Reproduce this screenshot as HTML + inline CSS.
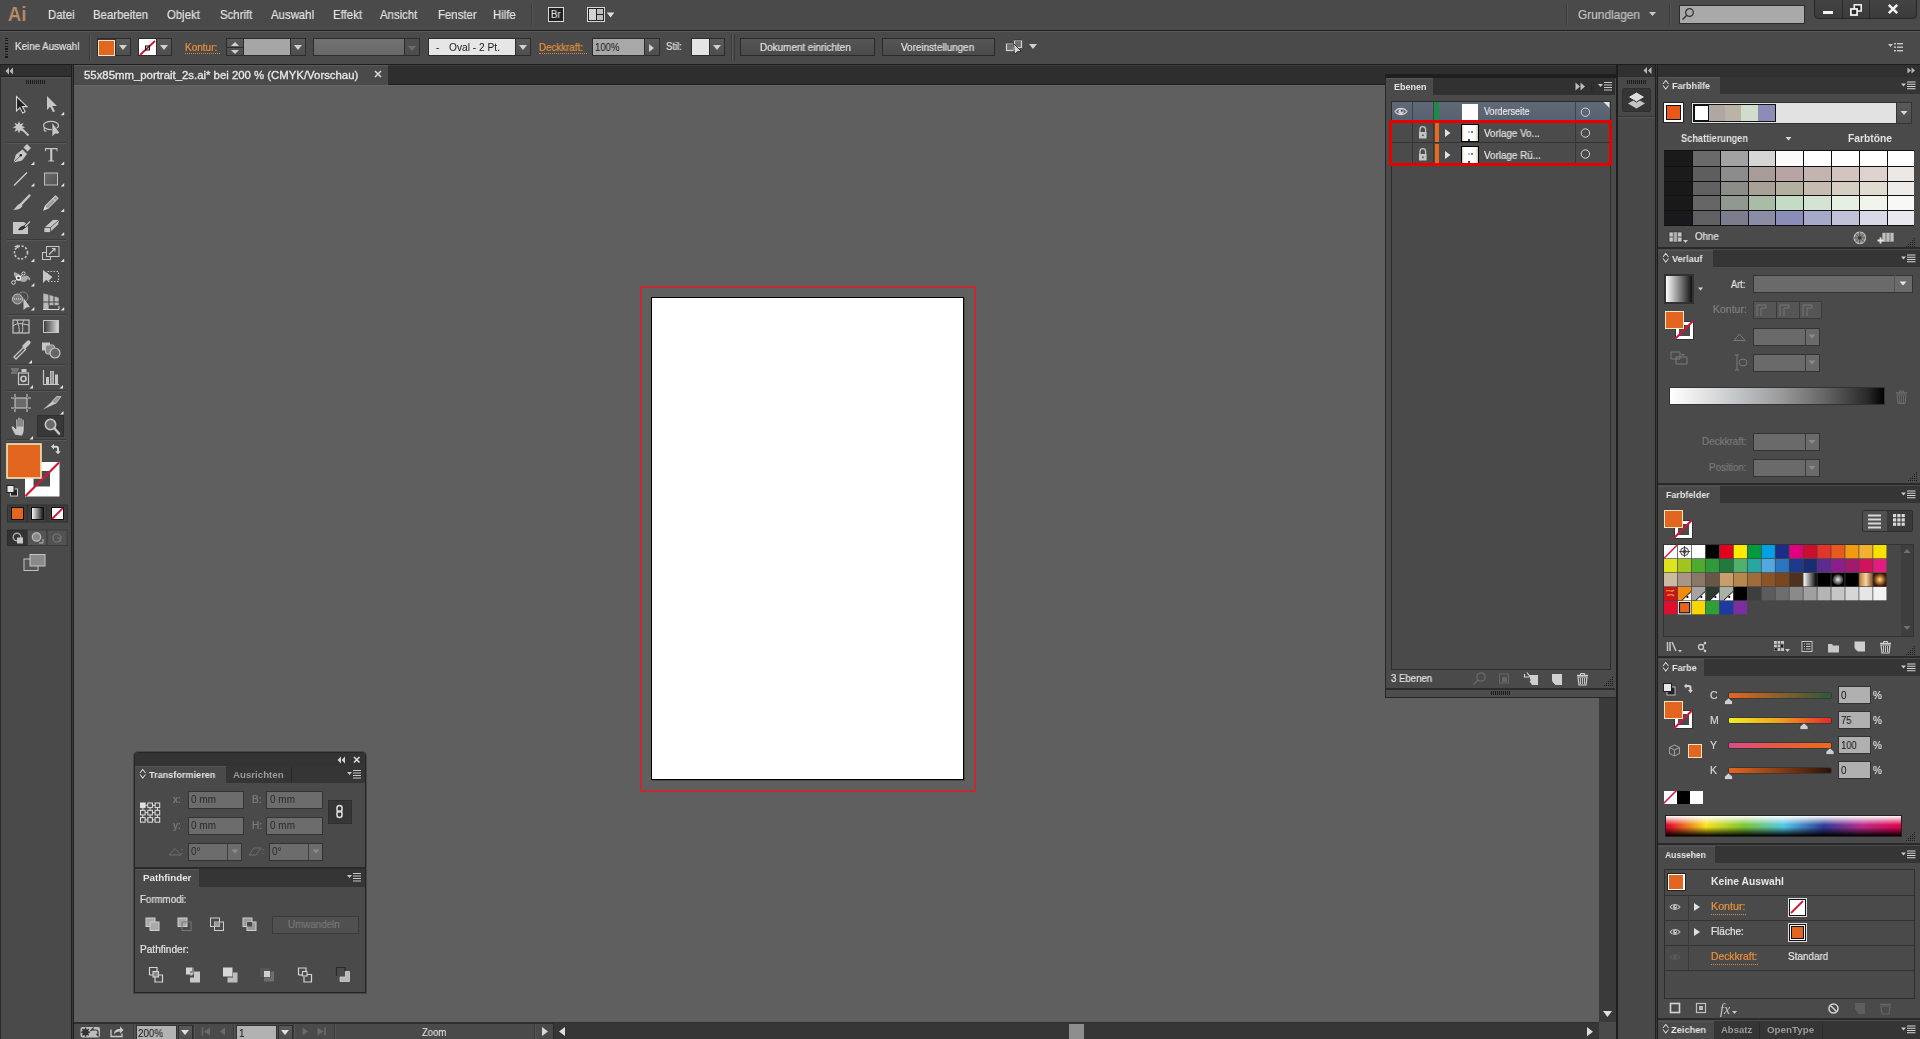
<!DOCTYPE html>
<html><head><meta charset="utf-8">
<style>
*{margin:0;padding:0;box-sizing:border-box}
html,body{width:1920px;height:1039px;overflow:hidden;background:#4a4a4a;font-family:"Liberation Sans",sans-serif;color:#dcdcdc;font-size:10px}
.a{position:absolute}
.t{position:absolute;white-space:nowrap;line-height:1;will-change:transform}
.r{-webkit-text-stroke:0.2px currentColor}
svg{overflow:visible}
</style></head><body>
<div class="a" style="left:0px;top:0px;width:1920px;height:30px;background:#4a4a4a;"></div>
<div class="a" style="left:0px;top:30px;width:1920px;height:1px;background:#1e1e1e;"></div>
<div class="a" style="left:0px;top:31px;width:1920px;height:33px;background:#4a4a4a;"></div>
<div class="a" style="left:0px;top:31px;width:1920px;height:1px;background:#5a5a5a;"></div>
<div class="a" style="left:0px;top:64px;width:1920px;height:1px;background:#1e1e1e;"></div>
<div class="a" style="left:0px;top:65px;width:1920px;height:1px;background:#3a3a3a;"></div>
<div class="a" style="left:0px;top:66px;width:1920px;height:18px;background:#2e2e2e;"></div>
<div class="a" style="left:0px;top:84px;width:1920px;height:1px;background:#1e1e1e;"></div>
<div class="a" style="left:74px;top:85px;width:1525px;height:937px;background:#5f5f5f;"></div>
<div class="a" style="left:74px;top:85px;width:1525px;height:1px;background:#666666;"></div>
<div class="a" style="left:0px;top:65px;width:1px;height:974px;background:#2b2b2b;"></div>
<div class="a" style="left:1px;top:65px;width:70px;height:12px;background:#303030;"></div>
<div class="a" style="left:1px;top:77px;width:70px;height:962px;background:#4a4a4a;"></div>
<div class="a" style="left:1px;top:76px;width:70px;height:1px;background:#1e1e1e;"></div>
<div class="a" style="left:1px;top:77px;width:70px;height:1px;background:#565656;"></div>
<div class="a" style="left:71px;top:65px;width:1px;height:974px;background:#1e1e1e;"></div>
<div class="a" style="left:72px;top:65px;width:1px;height:974px;background:#3a3a3a;"></div>
<div class="a" style="left:73px;top:65px;width:1px;height:974px;background:#1e1e1e;"></div>
<div class="a" style="left:74px;top:1022px;width:1525px;height:2px;background:#2e2e2e;"></div>
<div class="a" style="left:74px;top:1024px;width:1525px;height:15px;background:#4a4a4a;"></div>
<div class="a" style="left:1599px;top:85px;width:17px;height:937px;background:#3a3a3a;"></div>
<div class="a" style="left:1616px;top:65px;width:2px;height:974px;background:#1e1e1e;"></div>
<div class="a" style="left:1618px;top:65px;width:37px;height:12px;background:#303030;"></div>
<div class="a" style="left:1618px;top:77px;width:37px;height:962px;background:#484848;"></div>
<div class="a" style="left:1655px;top:65px;width:1px;height:974px;background:#1e1e1e;"></div>
<div class="a" style="left:1656px;top:65px;width:1px;height:974px;background:#363636;"></div>
<div class="a" style="left:1657px;top:65px;width:1px;height:974px;background:#1e1e1e;"></div>
<div class="a" style="left:1658px;top:65px;width:262px;height:12px;background:#303030;"></div>
<div class="a" style="left:1658px;top:77px;width:262px;height:962px;background:#4a4a4a;"></div>
<div class="a" style="left:640px;top:286px;width:336px;height:506px;border:2px solid #c22a34;"></div>
<div class="a" style="left:652px;top:298px;width:313px;height:483px;background:rgba(0,0,0,0.25);"></div>
<div class="a" style="left:651px;top:297px;width:313px;height:483px;background:#fff;border:1px solid #000;"></div>
<div class="t" style="left:8px;top:3.22px;font-size:21px;color:#b98a66;transform:scaleX(0.88);transform-origin:0 0;font-weight:bold;letter-spacing:0px;">Ai</div>
<div class="t r" style="left:47.5px;top:9.14px;font-size:12px;color:#e2e2e2;transform:scaleX(0.95);transform-origin:0 0;">Datei</div>
<div class="t r" style="left:92.5px;top:9.14px;font-size:12px;color:#e2e2e2;transform:scaleX(0.95);transform-origin:0 0;">Bearbeiten</div>
<div class="t r" style="left:167px;top:9.14px;font-size:12px;color:#e2e2e2;transform:scaleX(0.95);transform-origin:0 0;">Objekt</div>
<div class="t r" style="left:220px;top:9.14px;font-size:12px;color:#e2e2e2;transform:scaleX(0.95);transform-origin:0 0;">Schrift</div>
<div class="t r" style="left:271px;top:9.14px;font-size:12px;color:#e2e2e2;transform:scaleX(0.95);transform-origin:0 0;">Auswahl</div>
<div class="t r" style="left:333.3px;top:9.14px;font-size:12px;color:#e2e2e2;transform:scaleX(0.95);transform-origin:0 0;">Effekt</div>
<div class="t r" style="left:380px;top:9.14px;font-size:12px;color:#e2e2e2;transform:scaleX(0.95);transform-origin:0 0;">Ansicht</div>
<div class="t r" style="left:437.5px;top:9.14px;font-size:12px;color:#e2e2e2;transform:scaleX(0.95);transform-origin:0 0;">Fenster</div>
<div class="t r" style="left:493px;top:9.14px;font-size:12px;color:#e2e2e2;transform:scaleX(0.95);transform-origin:0 0;">Hilfe</div>
<div class="a" style="left:531px;top:4px;width:1px;height:21px;background:#3a3a3a;"></div>
<div class="a" style="left:532px;top:4px;width:1px;height:21px;background:#555;"></div>
<div class="a" style="left:548px;top:7px;width:16px;height:15px;background:#222;border:1px solid #d8d8d8;"></div>
<div class="t r" style="left:551px;top:9.84px;font-size:10px;color:#dcdcdc;transform:scaleX(0.95);transform-origin:0 0;">Br</div>
<svg class="a" style="left:586px;top:6px;" width="30" height="18" viewBox="0 0 30 18"><rect x="1.5" y="1.5" width="17" height="14" fill="#222" stroke="#d8d8d8"/><rect x="3" y="3" width="7" height="11" fill="#d4d4d4"/><rect x="11" y="3" width="6" height="5" fill="#bdbdbd"/><rect x="11" y="9" width="6" height="5" fill="#bdbdbd"/><path d="M20.8 6.5h7.5l-3.75 5z" fill="#e0e0e0"/></svg>
<div class="a" style="left:1566px;top:4px;width:1px;height:21px;background:#3a3a3a;"></div>
<div class="a" style="left:1567px;top:4px;width:1px;height:21px;background:#555;"></div>
<div class="t r" style="left:1578px;top:8.84px;font-size:12px;color:#c4c4c4;transform:scaleX(0.99);transform-origin:0 0;">Grundlagen</div>
<svg class="a" style="left:1649px;top:12px;" width="8" height="5" viewBox="0 0 8 5"><path d="M0 0h7l-3.5 4z" fill="#c8c8c8"/></svg>
<div class="a" style="left:1669px;top:4px;width:1px;height:21px;background:#3a3a3a;"></div>
<div class="a" style="left:1670px;top:4px;width:1px;height:21px;background:#555;"></div>
<div class="a" style="left:1679px;top:5px;width:126px;height:19px;background:#a9a9a9;border:1px solid #2c2c2c;"></div>
<svg class="a" style="left:1681px;top:7px;" width="14" height="14" viewBox="0 0 14 14"><circle cx="8.5" cy="5.5" r="3.8" fill="none" stroke="#333" stroke-width="1.3"/><path d="M6 8l-4.5 4.5" stroke="#333" stroke-width="1.4"/></svg>
<div class="a" style="left:1814px;top:-3px;width:103px;height:22px;background:linear-gradient(#444,#3b3b3b);border:1px solid #262626;border-radius:0 0 4px 4px;box-shadow:inset 0 1px 0 #555;"></div>
<div class="a" style="left:1842px;top:0px;width:1px;height:18px;background:#2a2a2a;"></div>
<div class="a" style="left:1869px;top:0px;width:1px;height:18px;background:#2a2a2a;"></div>
<div class="a" style="left:1823px;top:10.5px;width:10px;height:3.5px;background:#f0f0f0;"></div>
<svg class="a" style="left:1849px;top:3px;" width="14" height="13" viewBox="0 0 14 13"><rect x="5.3" y="1.8" width="6.9" height="6.2" fill="#2a2a2a" stroke="#eee" stroke-width="1.6"/><rect x="1.9" y="6" width="6.2" height="6" fill="#2a2a2a" stroke="#eee" stroke-width="1.8"/></svg>
<svg class="a" style="left:1887px;top:3px;" width="12" height="12" viewBox="0 0 12 12"><path d="M1.8 1.8l8.4 8.4M10.2 1.8l-8.4 8.4" stroke="#f0f0f0" stroke-width="2.6"/></svg>
<div class="a" style="left:5px;top:37.5px;width:3px;height:1.3px;background:#1a1a1a;"></div>
<div class="a" style="left:5px;top:40.2px;width:3px;height:1.3px;background:#1a1a1a;"></div>
<div class="a" style="left:5px;top:42.9px;width:3px;height:1.3px;background:#1a1a1a;"></div>
<div class="a" style="left:5px;top:45.6px;width:3px;height:1.3px;background:#1a1a1a;"></div>
<div class="a" style="left:5px;top:48.3px;width:3px;height:1.3px;background:#1a1a1a;"></div>
<div class="a" style="left:5px;top:51.0px;width:3px;height:1.3px;background:#1a1a1a;"></div>
<div class="a" style="left:5px;top:53.7px;width:3px;height:1.3px;background:#1a1a1a;"></div>
<div class="a" style="left:5px;top:56.400000000000006px;width:3px;height:1.3px;background:#1a1a1a;"></div>
<div class="t r" style="left:15.4px;top:41.53px;font-size:10px;color:#e0e0e0;transform:scaleX(0.98);transform-origin:0 0;">Keine Auswahl</div>
<div class="a" style="left:89px;top:34px;width:1px;height:27px;background:#3a3a3a;"></div>
<div class="a" style="left:90px;top:34px;width:1px;height:27px;background:#585858;"></div>
<div class="a" style="left:97px;top:38px;width:19px;height:18px;background:#3a3a3a;border:1px solid #2c2c2c;"></div>
<div class="a" style="left:98px;top:39.5px;width:17px;height:16px;background:#e3661f;border:1px solid #f2e6c8;"></div>
<div class="a" style="left:115px;top:38px;width:16px;height:18px;background:linear-gradient(#5a5a5a,#4e4e4e);border:1px solid #2c2c2c;"></div>
<svg class="a" style="left:119.0px;top:45.0px;" width="8" height="5" viewBox="0 0 8 5"><path d="M0 0h8l-4 5z" fill="#d0d0d0"/></svg>
<div class="a" style="left:138px;top:38px;width:19px;height:18px;background:#fff;border:1px solid #2c2c2c;"></div>
<svg class="a" style="left:139px;top:39.5px;" width="17" height="16" viewBox="0 0 17 16"><path d="M1 15L16 1" stroke="#d4102c" stroke-width="1.8"/><rect x="6.5" y="6" width="4" height="4" fill="none" stroke="#111" stroke-width="1"/></svg>
<div class="a" style="left:156px;top:38px;width:16px;height:18px;background:linear-gradient(#5a5a5a,#4e4e4e);border:1px solid #2c2c2c;"></div>
<svg class="a" style="left:160.0px;top:45.0px;" width="8" height="5" viewBox="0 0 8 5"><path d="M0 0h8l-4 5z" fill="#d0d0d0"/></svg>
<div class="t r" style="left:185px;top:42.73px;font-size:10px;color:#e8913a;transform:scaleX(1.0);transform-origin:0 0;">Kontur:</div>
<div class="a" style="left:185px;top:53px;width:35px;height:1px;border-top:1px dotted #d08a44;"></div>
<div class="a" style="left:226px;top:38px;width:18px;height:18px;background:linear-gradient(#5a5a5a,#4e4e4e);border:1px solid #2c2c2c;"></div>
<div class="a" style="left:227px;top:47px;width:16px;height:1px;background:#2c2c2c;"></div>
<svg class="a" style="left:231px;top:40.5px;" width="8" height="14" viewBox="0 0 8 14"><path d="M0 5h8l-4-4z M0 9h8l-4 4z" fill="#d0d0d0"/></svg>
<div class="a" style="left:243px;top:38px;width:48px;height:18px;background:#a6a6a6;border:1px solid #2c2c2c;"></div>
<div class="a" style="left:290px;top:38px;width:16px;height:18px;background:linear-gradient(#5a5a5a,#4e4e4e);border:1px solid #2c2c2c;"></div>
<svg class="a" style="left:294.0px;top:45.0px;" width="8" height="5" viewBox="0 0 8 5"><path d="M0 0h8l-4 5z" fill="#d0d0d0"/></svg>
<div class="a" style="left:313px;top:38px;width:92px;height:18px;background:linear-gradient(#727272,#686868);border:1px solid #2c2c2c;"></div>
<div class="a" style="left:404px;top:38px;width:16px;height:18px;background:#4e4e4e;border:1px solid #2c2c2c;"></div>
<svg class="a" style="left:408px;top:45.5px;" width="8" height="5" viewBox="0 0 8 5"><path d="M0 0h8l-4 5z" fill="#6c6c6c"/></svg>
<div class="a" style="left:428px;top:38px;width:88px;height:18px;background:#e6e6e6;border:1px solid #2c2c2c;"></div>
<div class="t" style="left:436px;top:42.53px;font-size:10px;color:#222;">-</div>
<div class="t" style="left:449px;top:42.53px;font-size:10px;color:#1a1a1a;transform:scaleX(1.02);transform-origin:0 0;">Oval - 2 Pt.</div>
<div class="a" style="left:515px;top:38px;width:16px;height:18px;background:linear-gradient(#5a5a5a,#4e4e4e);border:1px solid #2c2c2c;"></div>
<svg class="a" style="left:519.0px;top:45.0px;" width="8" height="5" viewBox="0 0 8 5"><path d="M0 0h8l-4 5z" fill="#d0d0d0"/></svg>
<div class="t r" style="left:539px;top:42.73px;font-size:10px;color:#e8913a;transform:scaleX(0.98);transform-origin:0 0;">Deckkraft:</div>
<div class="a" style="left:539px;top:53px;width:48px;height:1px;border-top:1px dotted #d08a44;"></div>
<div class="a" style="left:592px;top:38px;width:53px;height:18px;background:#a8a8a8;border:1px solid #2c2c2c;"></div>
<div class="t" style="left:595px;top:42.53px;font-size:10px;color:#141414;transform:scaleX(0.96);transform-origin:0 0;">100%</div>
<div class="a" style="left:644px;top:38px;width:16px;height:18px;background:linear-gradient(#5a5a5a,#4e4e4e);border:1px solid #2c2c2c;"></div>
<svg class="a" style="left:649px;top:43.5px;" width="6" height="8" viewBox="0 0 6 8"><path d="M0 0v8l5-4z" fill="#d0d0d0"/></svg>
<div class="t r" style="left:666px;top:41.53px;font-size:10px;color:#e0e0e0;transform:scaleX(0.95);transform-origin:0 0;">Stil:</div>
<div class="a" style="left:691px;top:38px;width:19px;height:18px;background:#e4e4e4;border:1px solid #2c2c2c;"></div>
<div class="a" style="left:709px;top:38px;width:16px;height:18px;background:linear-gradient(#5a5a5a,#4e4e4e);border:1px solid #2c2c2c;"></div>
<svg class="a" style="left:713.0px;top:45.0px;" width="8" height="5" viewBox="0 0 8 5"><path d="M0 0h8l-4 5z" fill="#d0d0d0"/></svg>
<div class="a" style="left:731px;top:34px;width:1px;height:27px;background:#3a3a3a;"></div>
<div class="a" style="left:732px;top:34px;width:1px;height:27px;background:#585858;"></div>
<div class="a" style="left:734px;top:34px;width:1px;height:27px;background:#3a3a3a;"></div>
<div class="a" style="left:739.5px;top:38px;width:135px;height:18px;background:linear-gradient(#565656,#4a4a4a);border:1px solid #2a2a2a;"></div>
<div class="t r" style="left:760px;top:42.53px;font-size:10px;color:#e0e0e0;transform:scaleX(0.99);transform-origin:0 0;">Dokument einrichten</div>
<div class="a" style="left:882px;top:38px;width:113px;height:18px;background:linear-gradient(#565656,#4a4a4a);border:1px solid #2a2a2a;"></div>
<div class="t r" style="left:900.8px;top:42.53px;font-size:10px;color:#e0e0e0;transform:scaleX(0.99);transform-origin:0 0;">Voreinstellungen</div>
<svg class="a" style="left:0px;top:0px;" width="1" height="1" viewBox="0 0 1 1"><rect x="1006.5" y="43.5" width="7" height="7" fill="#6e6e6e" stroke="#d2d2d2" stroke-width="1.2"/><rect x="1014.5" y="40.5" width="7" height="7" fill="#6e6e6e" stroke="#d2d2d2" stroke-width="1.2"/><path d="M1006 43h8M1014 40h8" stroke="#1a1a1a" stroke-width=".8"/><path d="M1013.5 43.5L1021.5 51.5h-4l-3 3z" fill="#d4d4d4" stroke="#1e1e1e" stroke-width=".8"/></svg>
<svg class="a" style="left:1029px;top:44px;" width="8" height="5" viewBox="0 0 8 5"><path d="M0 0h8l-4 5z" fill="#d0d0d0"/></svg>
<svg class="a" style="left:1888px;top:42px;" width="16" height="10" viewBox="0 0 16 10"><path d="M0 2h5l-2.5 3z" fill="#c8c8c8"/><rect x="6" y="1" width="2" height="1.4" fill="#c8c8c8"/><rect x="6" y="4.5" width="2" height="1.4" fill="#c8c8c8"/><rect x="6" y="8" width="2" height="1.4" fill="#c8c8c8"/><rect x="9" y="1" width="6" height="1.4" fill="#c8c8c8"/><rect x="9" y="4.5" width="6" height="1.4" fill="#c8c8c8"/><rect x="9" y="8" width="6" height="1.4" fill="#c8c8c8"/></svg>
<div class="a" style="left:74px;top:65px;width:315px;height:20px;background:#4a4a4a;border-top:1px solid #5a5a5a;border-right:1px solid #2e2e2e;"></div>
<div class="t r" style="left:83.7px;top:69.91px;font-size:10.5px;color:#e8e8e8;transform:scaleX(1.083);transform-origin:0 0;-webkit-text-stroke:0.3px #e8e8e8;">55x85mm_portrait_2s.ai* bei 200 % (CMYK/Vorschau)</div>
<svg class="a" style="left:374px;top:70px;" width="8" height="8" viewBox="0 0 8 8"><path d="M1 1l6 6M7 1l-6 6" stroke="#d8d8d8" stroke-width="1.6"/></svg>
<svg class="a" style="left:4px;top:66px;" width="10" height="10" viewBox="0 0 10 10"><path d="M5 1.5v7L1.5 5z M9 1.5v7L5.5 5z" fill="#b8b8b8"/></svg>
<div class="a" style="left:26px;top:80px;width:1px;height:4px;background:#1c1c1c;"></div>
<div class="a" style="left:28px;top:80px;width:1px;height:4px;background:#1c1c1c;"></div>
<div class="a" style="left:30px;top:80px;width:1px;height:4px;background:#1c1c1c;"></div>
<div class="a" style="left:32px;top:80px;width:1px;height:4px;background:#1c1c1c;"></div>
<div class="a" style="left:34px;top:80px;width:1px;height:4px;background:#1c1c1c;"></div>
<div class="a" style="left:36px;top:80px;width:1px;height:4px;background:#1c1c1c;"></div>
<div class="a" style="left:38px;top:80px;width:1px;height:4px;background:#1c1c1c;"></div>
<div class="a" style="left:40px;top:80px;width:1px;height:4px;background:#1c1c1c;"></div>
<div class="a" style="left:42px;top:80px;width:1px;height:4px;background:#1c1c1c;"></div>
<div class="a" style="left:44px;top:80px;width:1px;height:4px;background:#1c1c1c;"></div>
<div class="a" style="left:7px;top:142px;width:59px;height:1px;background:#3a3a3a;"></div>
<div class="a" style="left:7px;top:143px;width:59px;height:1px;background:#575757;"></div>
<div class="a" style="left:7px;top:239px;width:59px;height:1px;background:#3a3a3a;"></div>
<div class="a" style="left:7px;top:240px;width:59px;height:1px;background:#575757;"></div>
<div class="a" style="left:7px;top:314px;width:59px;height:1px;background:#3a3a3a;"></div>
<div class="a" style="left:7px;top:315px;width:59px;height:1px;background:#575757;"></div>
<div class="a" style="left:7px;top:364px;width:59px;height:1px;background:#3a3a3a;"></div>
<div class="a" style="left:7px;top:365px;width:59px;height:1px;background:#575757;"></div>
<div class="a" style="left:7px;top:390px;width:59px;height:1px;background:#3a3a3a;"></div>
<div class="a" style="left:7px;top:391px;width:59px;height:1px;background:#575757;"></div>
<div class="a" style="left:37px;top:415px;width:27px;height:22px;background:#383838;border:1px solid #303030;"></div>
<div class="a" style="left:7px;top:439px;width:59px;height:1px;background:#3a3a3a;"></div>
<div class="a" style="left:7px;top:440px;width:59px;height:1px;background:#575757;"></div>
<svg class="a" style="left:0px;top:0px;" width="72" height="600" viewBox="0 0 72 600"><path d="M16.5 96.5v14.5l3.4-3.4 2.8 5.4 2.4-1.2-2.7-5.2h4.6z" fill="#222" stroke="#d4d4d4" stroke-width="1.1"/><path d="M47 96v14l3.2-3.2 2.8 5.4 2-1-2.7-5.2h4.7z" fill="#c6c6c6"/><path d="M64.2 111.8v3.5h-3.5z" fill="#e2e2e2"/><path d="M19 121l1.3 3.2 3.2-1.5-1.5 3.3 3.2 1.3-3.2 1.2 1.5 3.3-3.2-1.5-1.3 3.3-1.2-3.3-3.3 1.5 1.5-3.3-3.3-1.2 3.3-1.3-1.5-3.3 3.3 1.5z" fill="#c6c6c6"/><path d="M21.5 128.5l7 7" stroke="#c6c6c6" stroke-width="2"/><ellipse cx="51" cy="125.5" rx="7.5" ry="4.2" fill="none" stroke="#c6c6c6" stroke-width="1.2"/><path d="M44.5 128c-1 2 0 3.5 2 3" fill="none" stroke="#c6c6c6" stroke-width="1.2"/><path d="M52 122v15l3-3 3 0 1.5-1.5z" fill="#c6c6c6" stroke="#333" stroke-width=".6"/><path d="M13 163l2.5-8.5 7-5.5 5 5-5.5 7z" fill="#c6c6c6" stroke="#333" stroke-width=".6"/><path d="M23.5 147.5l3.5-3.5 4 4-3.5 3.5z" fill="#c6c6c6"/><circle cx="20.8" cy="155.3" r="1.2" fill="#222"/><path d="M13.5 162.5l6.5-6.5" stroke="#555" stroke-width=".8"/><path d="M34.4 161.5v3.5h-3.5z" fill="#e2e2e2"/><path d="M45 148h12.5v3.2h-1v-2h-4.2v11.3h1.8v1h-5.7v-1h1.8v-11.3h-4.2v2h-1z" fill="#c6c6c6"/><path d="M64.2 161.5v3.5h-3.5z" fill="#e2e2e2"/><path d="M14 185.5l13-13" stroke="#d0d0d0" stroke-width="1.3"/><path d="M34.4 183v3.5h-3.5z" fill="#e2e2e2"/><defs><linearGradient id="rg" x1="0" y1="0" x2="1" y2="1"><stop offset="0" stop-color="#6a6a6a"/><stop offset="1" stop-color="#545454"/></linearGradient><linearGradient id="gg" x1="0" y1="0" x2="1" y2="0"><stop offset="0" stop-color="#3a3a3a"/><stop offset="1" stop-color="#dadada"/></linearGradient></defs><rect x="44.5" y="173" width="13" height="12" fill="url(#rg)" stroke="#bdbdbd"/><path d="M64.2 183v3.5h-3.5z" fill="#e2e2e2"/><path d="M29.5 195.5l-8.5 8.8" stroke="#c6c6c6" stroke-width="2.4" stroke-linecap="round"/><path d="M20.5 203.5l2 2c-1 3-4 4.5-9.5 4.3 3-1.5 3.5-5 7.5-6.3z" fill="#c6c6c6"/><path d="M55.5 195.8l2.5 2.5-10 10-4 1.5 1.5-4z" fill="#9c9c9c" stroke="#c6c6c6" stroke-width="1.1"/><path d="M53 198.5l2.5 2.5" stroke="#c6c6c6" stroke-width="1.2"/><path d="M43.5 210l1.6-4 2.4 2.4z" fill="#ddd"/><path d="M64.2 208.5v3.5h-3.5z" fill="#e2e2e2"/><path d="M13 222h11l4 3v9h-15z" fill="#c6c6c6"/><path d="M18 230c2-4 5-5 8-4-1 3-4 5-8 4z" fill="#333"/><path d="M24.5 227l5.5-5.5" stroke="#333" stroke-width="2.6"/><path d="M25 226.5l5-5" stroke="#ccc" stroke-width="1.4"/><path d="M44 227.5l9-8h6.5l-1 5-8.5 8h-6z" fill="#c6c6c6" stroke="#333" stroke-width=".6"/><path d="M44 227.5h6.5l9-8M50.5 227.5v5.5" stroke="#444" stroke-width=".8" fill="none"/><path d="M64.2 232v3.5h-3.5z" fill="#e2e2e2"/><circle cx="21" cy="252.5" r="6.5" fill="none" stroke="#c6c6c6" stroke-width="1.6" stroke-dasharray="2.2 1.6"/><path d="M14 246.5l4.5-2v4z" fill="#c6c6c6"/><path d="M34.4 258.5v3.5h-3.5z" fill="#e2e2e2"/><rect x="42.5" y="252.5" width="8" height="7" fill="none" stroke="#c6c6c6"/><rect x="46.5" y="246.5" width="12.5" height="10" fill="#4a4a4a" stroke="#c6c6c6"/><path d="M49 254.5l6-6M52 248.5h3v3" stroke="#c6c6c6" stroke-width="1.1" fill="none"/><path d="M64.2 258.5v3.5h-3.5z" fill="#e2e2e2"/><path d="M14 272c-1 5 3 7 6 9 4 2 7 1 8-3 1 4 3 2 2 0-2-3-4-3-6-2-2 1-4 0-5-2z" fill="#aaa"/><path d="M13.5 282.5l10-9" stroke="#ddd" stroke-width="1"/><circle cx="13.5" cy="282.5" r="1.8" fill="#444" stroke="#ddd"/><circle cx="18.5" cy="278" r="2" fill="#444" stroke="#eee" stroke-width="1.3"/><circle cx="23.5" cy="273.5" r="1.6" fill="#444" stroke="#ddd"/><path d="M34.4 283v3.5h-3.5z" fill="#e2e2e2"/><rect x="47.5" y="271.5" width="11" height="10" fill="none" stroke="#c6c6c6" stroke-dasharray="1.5 1.5"/><path d="M43 270v13l3-3 2.5 1 4-4z" fill="#c6c6c6"/><circle cx="17.5" cy="299" r="5" fill="#7a7a7a" stroke="#c6c6c6"/><circle cx="23" cy="297" r="5" fill="none" stroke="#888" stroke-width="1"/><path d="M14 299h8" stroke="#eee" stroke-dasharray="1 1"/><path d="M23.5 298v12l3-2.5 3.5-.5z" fill="#c6c6c6"/><path d="M34.4 307v3.5h-3.5z" fill="#e2e2e2"/><path d="M43 293l6 1.5v15h-6z M49 294.5l5 1.5v9.5h-5z M54 296l5 1.5v8h-5z" fill="#b8b8b8" stroke="#444" stroke-width=".6"/><path d="M43 302h16" stroke="#444"/><path d="M43 309.5h16M59 306v3.5" stroke="#ddd"/><path d="M64.2 307v3.5h-3.5z" fill="#e2e2e2"/><rect x="13" y="320" width="16" height="13" fill="#4a4a4a" stroke="#c6c6c6" stroke-width="1.2"/><path d="M13 326c5-4 8-2 16-1M17 320c1 5 3 8 2 13M24 320c-3 4 0 8-2 13" stroke="#c6c6c6" fill="none" stroke-width="1"/><rect x="43.5" y="320.5" width="15" height="12" fill="url(#gg)" stroke="#c4c4c4"/><path d="M14 357l9.5-9.5 2 2L16 359z" fill="none" stroke="#c6c6c6" stroke-width="1.3"/><path d="M22 346l5-5a2 2 0 0 1 3 3l-5 5z" fill="#c6c6c6"/><path d="M32 360v3.5h-3.5z" fill="#e2e2e2"/><rect x="42" y="342.5" width="8" height="8" fill="#c6c6c6"/><rect x="45.5" y="345" width="9" height="9" rx="2" fill="#888" stroke="#c6c6c6"/><circle cx="55" cy="353" r="5" fill="#666" stroke="#c6c6c6" stroke-width="1.2"/><rect x="18.5" y="373" width="10" height="11.5" fill="#4a4a4a" stroke="#c6c6c6" stroke-width="1.2"/><circle cx="23.5" cy="378.8" r="2.6" fill="none" stroke="#c6c6c6" stroke-width="1.6"/><rect x="21.5" y="369" width="5" height="3" fill="#c6c6c6"/><g fill="#bbb"><circle cx="12" cy="369" r=".7"/><circle cx="14" cy="369" r=".7"/><circle cx="16" cy="369" r=".7"/><circle cx="18" cy="369" r=".7"/><circle cx="13" cy="371" r=".7"/><circle cx="15" cy="371" r=".7"/><circle cx="17" cy="371" r=".7"/><circle cx="12" cy="373" r=".7"/><circle cx="14" cy="373" r=".7"/><circle cx="16" cy="373" r=".7"/></g><path d="M33 385v3.5h-3.5z" fill="#e2e2e2"/><path d="M43.5 370v14.5H59" stroke="#c6c6c6" fill="none" stroke-width="1.2"/><rect x="46" y="377" width="3" height="7" fill="#c6c6c6"/><rect x="50.5" y="371.5" width="3" height="12.5" fill="#999" stroke="#c6c6c6" stroke-width=".8"/><rect x="55" y="374.5" width="3" height="9.5" fill="#c6c6c6"/><path d="M63 385v3.5h-3.5z" fill="#e2e2e2"/><rect x="15" y="398" width="12" height="10" fill="#6a6a6a" stroke="#c6c6c6" stroke-width="1.1"/><path d="M15 394v3M27 394v3M15 409v3M27 409v3M11 398h3M28 398h3M11 408h3M28 408h3" stroke="#c6c6c6" stroke-width="1.1"/><path d="M43 409.5l9-8 4 2z" fill="#c6c6c6"/><path d="M52 401.5l4.5-5h4.5l-5 7z" fill="#999" stroke="#c6c6c6" stroke-width=".8"/><path d="M63.5 411v3.5h-3.5z" fill="#e2e2e2"/><path d="M15 435l-3.5-7c-.5-1.5 1-2.5 2-1.5l2.5 2.5v-9c0-1.2 2-1.2 2 0v6.5-8c0-1.2 2-1.2 2 0v8-7.5c0-1.2 2-1.2 2 0v7.5-6c0-1.2 2-1.2 2 0v9c0 3-1 5-2 6.5z" fill="#c6c6c6" stroke="#3a3a3a" stroke-width=".5"/><path d="M33 436v3.5h-3.5z" fill="#e2e2e2"/><circle cx="50.5" cy="424.5" r="5.2" fill="#6a6a6a" stroke="#c6c6c6" stroke-width="1.6"/><path d="M54.5 428.5l4.5 5" stroke="#c6c6c6" stroke-width="2.6" stroke-linecap="round"/><rect x="25" y="462" width="34.5" height="34.5" fill="#fff"/><rect x="33.5" y="471" width="16.5" height="15.5" fill="#4a4a4a"/><path d="M25.5 496L59 462.5" stroke="#d4143a" stroke-width="2.2"/><rect x="7" y="444" width="34" height="34" fill="#e2661f" stroke="#f4e6bc" stroke-width="1.6"/><path d="M51 446.5l3-2.5v1.8h2.5c1.5 0 2.5 1 2.5 2.5v3h1.8l-2.8 3-2.8-3h1.8v-2.8c0-.5-.2-.8-.8-.8h-2.2v1.8z" fill="#d4d4d4"/><rect x="10.5" y="489" width="7" height="7" fill="#222" stroke="#ccc"/><rect x="7" y="485.5" width="7" height="7" fill="#e8e8e8" stroke="#222"/><rect x="7.5" y="505" width="19.5" height="17" fill="#3e3e3e" stroke="#303030"/><rect x="27.7" y="505" width="19" height="17" fill="#3e3e3e" stroke="#303030"/><rect x="48" y="505" width="19.5" height="17" fill="#3e3e3e" stroke="#303030"/><rect x="11.5" y="507.5" width="12" height="12" fill="#e2661f" stroke="#111"/><rect x="31.5" y="507.5" width="12" height="12" fill="url(#gg2)" stroke="#111"/><defs><linearGradient id="gg2"><stop offset="0" stop-color="#fff"/><stop offset="1" stop-color="#111"/></linearGradient></defs><rect x="51.5" y="507.5" width="12" height="12" fill="#fff" stroke="#111"/><path d="M52 519L63 508" stroke="#d4143a" stroke-width="1.8"/><rect x="7.5" y="530" width="20" height="15.5" fill="#333" stroke="#2c2c2c"/><rect x="27.5" y="530" width="19.5" height="15.5" fill="#555" stroke="#3a3a3a"/><rect x="47" y="530" width="20" height="15.5" fill="#525252" stroke="#3a3a3a"/><circle cx="17" cy="537" r="3.8" fill="none" stroke="#aaa" stroke-width="1.4"/><rect x="17" y="537.5" width="6" height="6" fill="#c8c8c8"/><circle cx="36.5" cy="537" r="4.2" fill="#888" stroke="#bbb" stroke-width="1.2"/><path d="M39 543h4v-4" stroke="#bbb" fill="none"/><circle cx="57" cy="538" r="4" fill="none" stroke="#777" stroke-width="1.2"/><path d="M57 538h3v4" stroke="#777" fill="none"/><rect x="24" y="559" width="14" height="11.5" fill="#555" stroke="#c4c4c4"/><rect x="30" y="554.5" width="15" height="11.5" fill="#8a8a8a" stroke="#c4c4c4"/></svg>
<svg class="a" style="left:0px;top:0px;" width="1" height="1" viewBox="0 0 1 1"><rect x="80.5" y="1027" width="19.5" height="10.5" rx="2" fill="#bdbdbd"/><circle cx="85.5" cy="1032.2" r="3.2" fill="#333"/><circle cx="85.5" cy="1032.2" r="1.2" fill="#bdbdbd"/><path d="M85.5 1027.6v9.2M80.9 1032.2h9.2M82.3 1029l6.4 6.4M88.7 1029l-6.4 6.4" stroke="#333" stroke-width="1.3"/><path d="M90.5 1031l2.5-2.5v1.5h3c1.5 0 2 1 2 2v3.5l-1.5-1.5" stroke="#333" fill="none" stroke-width="1.2"/><path d="M111 1029.5v7h11v-3" stroke="#c8c8c8" fill="none" stroke-width="1.3"/><path d="M114 1034c0-3 2-5 6-5v-2.5l3.5 3.5-3.5 3.5v-2c-3 0-4.5 1-6 2.5z" fill="#c8c8c8"/></svg>
<div class="a" style="left:133px;top:1024px;width:1px;height:15px;background:#3a3a3a;"></div>
<div class="a" style="left:134px;top:1024px;width:1px;height:15px;background:#565656;"></div>
<div class="a" style="left:135.5px;top:1025px;width:41.5px;height:14px;background:#b2b2b2;border:1px solid #333;border-bottom:none;"></div>
<div class="t" style="left:138px;top:1029.04px;font-size:10px;color:#111;transform:scaleX(0.98);transform-origin:0 0;">200%</div>
<div class="a" style="left:177.5px;top:1025px;width:15px;height:14px;background:linear-gradient(#5a5a5a,#4e4e4e);border:1px solid #2e2e2e;border-bottom:none;"></div>
<svg class="a" style="left:181px;top:1030px;" width="8" height="5" viewBox="0 0 8 5"><path d="M0 0h8l-4 5z" fill="#e0e0e0"/></svg>
<div class="a" style="left:193px;top:1024px;width:1px;height:15px;background:#3a3a3a;"></div>
<div class="a" style="left:194px;top:1024px;width:1px;height:15px;background:#565656;"></div>
<svg class="a" style="left:0px;top:0px;" width="1" height="1" viewBox="0 0 1 1"><path d="M202.5 1027.5v8" stroke="#6a6a6a" stroke-width="1.6"/><path d="M210 1027.5v8l-6-4z M225 1027.5v8l-5-4z" fill="#6a6a6a"/></svg>
<div class="a" style="left:233px;top:1024px;width:1px;height:15px;background:#3a3a3a;"></div>
<div class="a" style="left:234px;top:1024px;width:1px;height:15px;background:#565656;"></div>
<div class="a" style="left:235.5px;top:1025px;width:41.5px;height:14px;background:#b2b2b2;border:1px solid #333;border-bottom:none;"></div>
<div class="t" style="left:239px;top:1029.04px;font-size:10px;color:#111;">1</div>
<div class="a" style="left:277.5px;top:1025px;width:15px;height:14px;background:linear-gradient(#5a5a5a,#4e4e4e);border:1px solid #2e2e2e;border-bottom:none;"></div>
<svg class="a" style="left:281px;top:1030px;" width="8" height="5" viewBox="0 0 8 5"><path d="M0 0h8l-4 5z" fill="#e0e0e0"/></svg>
<div class="a" style="left:293px;top:1024px;width:1px;height:15px;background:#3a3a3a;"></div>
<div class="a" style="left:294px;top:1024px;width:1px;height:15px;background:#565656;"></div>
<svg class="a" style="left:0px;top:0px;" width="1" height="1" viewBox="0 0 1 1"><path d="M302.5 1027.5v8l5.5-4z M317.5 1027.5v8l6-4z" fill="#6a6a6a"/><path d="M325 1027.5v8" stroke="#6a6a6a" stroke-width="1.6"/></svg>
<div class="a" style="left:334px;top:1024px;width:1px;height:15px;background:#3a3a3a;"></div>
<div class="a" style="left:335px;top:1024px;width:1px;height:15px;background:#565656;"></div>
<div class="t r" style="left:422px;top:1028.04px;font-size:10px;color:#dedede;transform:scaleX(0.95);transform-origin:0 0;">Zoom</div>
<div class="a" style="left:534px;top:1024px;width:1px;height:15px;background:#3a3a3a;"></div>
<div class="a" style="left:535px;top:1024px;width:1px;height:15px;background:#565656;"></div>
<svg class="a" style="left:0px;top:0px;" width="1" height="1" viewBox="0 0 1 1"><path d="M542 1027v9l6-4.5z" fill="#d8d8d8"/></svg>
<div class="a" style="left:553px;top:1023px;width:1046px;height:16px;background:#363636;"></div>
<div class="a" style="left:553px;top:1023px;width:1px;height:16px;background:#2a2a2a;"></div>
<svg class="a" style="left:0px;top:0px;" width="1" height="1" viewBox="0 0 1 1"><path d="M565 1027v9l-6-4.5z M1587 1027v9.3l6-4.6z" fill="#dedede"/></svg>
<div class="a" style="left:1069px;top:1024px;width:15px;height:15px;background:#8e8e8e;"></div>
<div class="a" style="left:1599px;top:1023px;width:17px;height:16px;background:#4a4a4a;"></div>
<svg class="a" style="left:0px;top:0px;" width="1" height="1" viewBox="0 0 1 1"><path d="M1603 1011h9l-4.5 6z" fill="#e0e0e0"/></svg>
<div class="a" style="left:1385px;top:74px;width:231px;height:624px;background:#4a4a4a;border:1px solid #262626;border-right:none;border-top:4px solid #1e1e1e;"></div>
<div class="a" style="left:1386px;top:78px;width:229px;height:17px;background:#313131;"></div>
<div class="a" style="left:1386px;top:78px;width:47px;height:17px;background:#4a4a4a;border-top:1px solid #575757;"></div>
<div class="t" style="left:1393.5px;top:82.88px;font-size:9px;color:#e6e6e6;font-weight:bold;transform:scaleX(0.99);transform-origin:0 0;">Ebenen</div>
<svg class="a" style="left:0px;top:0px;" width="1" height="1" viewBox="0 0 1 1"><path d="M1575.5 82.5v8l4.5-4z M1580.5 82.5v8l4.5-4z" fill="#bdbdbd"/><path d="M1591.5 81v11M1593.5 81v11" stroke="#2a2a2a"/><path d="M1598 84h5l-2.5 3z" fill="#c8c8c8"/><path d="M1604 82.5h8M1604 85h8M1604 87.5h8M1604 90h8" stroke="#c8c8c8" stroke-width="1.2"/></svg>
<div class="a" style="left:1391px;top:101px;width:220px;height:569px;background:#4a4a4a;border:1px solid #2c2c2c;"></div>
<div class="a" style="left:1392px;top:102px;width:218px;height:18px;background:linear-gradient(#5f6978,#586170);"></div>
<div class="a" style="left:1412px;top:102px;width:1px;height:18px;background:#3c4452;"></div>
<div class="a" style="left:1433px;top:102px;width:1px;height:18px;background:#3c4452;"></div>
<div class="a" style="left:1575px;top:102px;width:1px;height:18px;background:#3c4452;"></div>
<div class="a" style="left:1434px;top:102px;width:5px;height:18px;background:#1f8a48;"></div>
<div class="a" style="left:1462px;top:104px;width:16px;height:16px;background:#fdfdfd;"></div>
<div class="t r" style="left:1484px;top:106.53px;font-size:10px;color:#e8e8e8;transform:scaleX(0.9);transform-origin:0 0;">Vorderseite</div>
<svg class="a" style="left:0px;top:0px;" width="1" height="1" viewBox="0 0 1 1"><path d="M1603.5 102h6v6z" fill="#e4e4e4"/></svg>
<svg class="a" style="left:0px;top:0px;" width="1" height="1" viewBox="0 0 1 1"><path d="M1395 111.5c2.8-4.2 9.2-4.2 12 0-2.8 4.2-9.2 4.2-12 0z" fill="none" stroke="#d0d0d0" stroke-width="1.2"/><circle cx="1401" cy="111.5" r="2.6" fill="#d0d0d0"/><circle cx="1401.8" cy="110.8" r="1" fill="#3a3f48"/></svg>
<div class="a" style="left:1392px;top:121px;width:218px;height:21px;background:#4b4b4b;"></div>
<div class="a" style="left:1392px;top:142px;width:218px;height:1px;background:#333;"></div>
<div class="a" style="left:1412px;top:121px;width:1px;height:21px;background:#363636;"></div>
<div class="a" style="left:1433px;top:121px;width:1px;height:21px;background:#363636;"></div>
<div class="a" style="left:1575px;top:121px;width:1px;height:21px;background:#363636;"></div>
<div class="a" style="left:1434.5px;top:122px;width:4px;height:20px;background:#e8681e;"></div>
<div class="a" style="left:1461px;top:124px;width:18px;height:18px;background:#000;"></div>
<div class="a" style="left:1462px;top:125px;width:16px;height:16px;background:linear-gradient(90deg,#d8c8a8 0,#fff 2px,#fff 13px,#d8c8a8 16px);"></div>
<svg class="a" style="left:0px;top:0px;" width="1" height="1" viewBox="0 0 1 1"><circle cx="1469" cy="132" r="1" fill="#aab"/><circle cx="1472" cy="132" r="1" fill="#555"/><rect x="1468" y="139" width="2" height="2" fill="#444"/></svg>
<div class="t r" style="left:1484px;top:128.53px;font-size:10px;color:#e4e4e4;transform:scaleX(0.985);transform-origin:0 0;">Vorlage Vo...</div>
<svg class="a" style="left:0px;top:0px;" width="1" height="1" viewBox="0 0 1 1"><path d="M1420 132v-2.5a2.8 2.8 0 0 1 5.6 0v2.5" fill="none" stroke="#c4c4c4" stroke-width="1.3"/><rect x="1419" y="132" width="7.6" height="6.5" fill="#c4c4c4"/><rect x="1422.2" y="134.5" width="1.4" height="1.6" fill="#444"/></svg>
<svg class="a" style="left:0px;top:0px;" width="1" height="1" viewBox="0 0 1 1"><path d="M1445 129v8l5.5-4z" fill="#e0e0e0"/></svg>
<div class="a" style="left:1392px;top:143px;width:218px;height:21px;background:#4b4b4b;"></div>
<div class="a" style="left:1392px;top:164px;width:218px;height:1px;background:#333;"></div>
<div class="a" style="left:1412px;top:143px;width:1px;height:21px;background:#363636;"></div>
<div class="a" style="left:1433px;top:143px;width:1px;height:21px;background:#363636;"></div>
<div class="a" style="left:1575px;top:143px;width:1px;height:21px;background:#363636;"></div>
<div class="a" style="left:1434.5px;top:144px;width:4px;height:20px;background:#e8681e;"></div>
<div class="a" style="left:1461px;top:146px;width:18px;height:18px;background:#000;"></div>
<div class="a" style="left:1462px;top:147px;width:16px;height:16px;background:linear-gradient(90deg,#d8c8a8 0,#fff 2px,#fff 13px,#d8c8a8 16px);"></div>
<svg class="a" style="left:0px;top:0px;" width="1" height="1" viewBox="0 0 1 1"><circle cx="1469" cy="154" r="1" fill="#aab"/><circle cx="1472" cy="154" r="1" fill="#555"/><rect x="1468" y="161" width="2" height="2" fill="#444"/></svg>
<div class="t r" style="left:1484px;top:150.53px;font-size:10px;color:#e4e4e4;transform:scaleX(0.985);transform-origin:0 0;">Vorlage Rü...</div>
<svg class="a" style="left:0px;top:0px;" width="1" height="1" viewBox="0 0 1 1"><path d="M1420 154v-2.5a2.8 2.8 0 0 1 5.6 0v2.5" fill="none" stroke="#c4c4c4" stroke-width="1.3"/><rect x="1419" y="154" width="7.6" height="6.5" fill="#c4c4c4"/><rect x="1422.2" y="156.5" width="1.4" height="1.6" fill="#444"/></svg>
<svg class="a" style="left:0px;top:0px;" width="1" height="1" viewBox="0 0 1 1"><path d="M1445 151v8l5.5-4z" fill="#e0e0e0"/></svg>
<svg class="a" style="left:0px;top:0px;" width="1" height="1" viewBox="0 0 1 1"><circle cx="1585.4" cy="112.2" r="4.2" fill="none" stroke="#d4d4d4" stroke-width="1"/></svg>
<svg class="a" style="left:0px;top:0px;" width="1" height="1" viewBox="0 0 1 1"><circle cx="1585.4" cy="133" r="4.2" fill="none" stroke="#d4d4d4" stroke-width="1"/></svg>
<svg class="a" style="left:0px;top:0px;" width="1" height="1" viewBox="0 0 1 1"><circle cx="1585.4" cy="154" r="4.2" fill="none" stroke="#d4d4d4" stroke-width="1"/></svg>
<div class="a" style="left:1389px;top:120px;width:223px;height:46px;border:3px solid #e60000;border-radius:1px;"></div>
<div class="t r" style="left:1391px;top:674.03px;font-size:10px;color:#e6e6e6;transform:scaleX(0.96);transform-origin:0 0;">3 Ebenen</div>
<svg class="a" style="left:0px;top:0px;" width="1" height="1" viewBox="0 0 1 1"><circle cx="1481" cy="677" r="4.2" fill="none" stroke="#6a6a6a" stroke-width="1.3"/><path d="M1478 680l-4.5 4.5" stroke="#6a6a6a" stroke-width="1.3"/><rect x="1499.5" y="674" width="9" height="9" fill="none" stroke="#666"/><rect x="1502" y="677" width="5" height="5" fill="#666"/><path d="M1529 675h9v10h-6z" fill="#cfcfcf"/><path d="M1524.5 674v3h5M1527 672.5l2.5 3.5M1530 681l2.5 3" stroke="#d4d4d4" stroke-width="1.2" fill="none"/><path d="M1552 674h10v11h-10z" fill="#cfcfcf"/><path d="M1552 680.5l3.5 4.5h-3.5z" fill="#4a4a4a"/><path d="M1552.5 681.5l3 3" stroke="#ccc"/><path d="M1577 675.5h11" stroke="#d0d0d0" stroke-width="1.5"/><path d="M1580.5 675v-1.5h4v1.5" stroke="#d0d0d0" fill="none"/><path d="M1578 677h9l-1 8h-7z" fill="none" stroke="#d0d0d0" stroke-width="1.2"/><path d="M1580.5 678v6M1582.5 678v6M1584.5 678v6" stroke="#d0d0d0" stroke-width=".9"/></svg>
<svg class="a" style="left:0px;top:0px;" width="1" height="1" viewBox="0 0 1 1"><rect x="1612" y="677" width="1" height="1" fill="#1a1a1a"/><rect x="1610" y="679" width="1" height="1" fill="#1a1a1a"/><rect x="1612" y="679" width="1" height="1" fill="#1a1a1a"/><rect x="1608" y="681" width="1" height="1" fill="#1a1a1a"/><rect x="1610" y="681" width="1" height="1" fill="#1a1a1a"/><rect x="1612" y="681" width="1" height="1" fill="#1a1a1a"/><rect x="1606" y="683" width="1" height="1" fill="#1a1a1a"/><rect x="1608" y="683" width="1" height="1" fill="#1a1a1a"/><rect x="1610" y="683" width="1" height="1" fill="#1a1a1a"/><rect x="1612" y="683" width="1" height="1" fill="#1a1a1a"/><rect x="1604" y="685" width="1" height="1" fill="#1a1a1a"/><rect x="1606" y="685" width="1" height="1" fill="#1a1a1a"/><rect x="1608" y="685" width="1" height="1" fill="#1a1a1a"/><rect x="1610" y="685" width="1" height="1" fill="#1a1a1a"/><rect x="1612" y="685" width="1" height="1" fill="#1a1a1a"/></svg>
<div class="a" style="left:1386px;top:688px;width:229px;height:2px;background:#2c2c2c;"></div>
<div class="a" style="left:1386px;top:690px;width:229px;height:7px;background:#4d4d4d;"></div>
<div class="a" style="left:1491px;top:691px;width:1px;height:4px;background:#1a1a1a;"></div>
<div class="a" style="left:1493px;top:691px;width:1px;height:4px;background:#1a1a1a;"></div>
<div class="a" style="left:1495px;top:691px;width:1px;height:4px;background:#1a1a1a;"></div>
<div class="a" style="left:1497px;top:691px;width:1px;height:4px;background:#1a1a1a;"></div>
<div class="a" style="left:1499px;top:691px;width:1px;height:4px;background:#1a1a1a;"></div>
<div class="a" style="left:1501px;top:691px;width:1px;height:4px;background:#1a1a1a;"></div>
<div class="a" style="left:1503px;top:691px;width:1px;height:4px;background:#1a1a1a;"></div>
<div class="a" style="left:1505px;top:691px;width:1px;height:4px;background:#1a1a1a;"></div>
<div class="a" style="left:1507px;top:691px;width:1px;height:4px;background:#1a1a1a;"></div>
<div class="a" style="left:1509px;top:691px;width:1px;height:4px;background:#1a1a1a;"></div>
<svg class="a" style="left:0px;top:0px;" width="1" height="1" viewBox="0 0 1 1"><path d="M1647 67v7l-3.5-3.5z M1651.5 67v7l-3.5-3.5z M1907.5 67.5v6l3.5-3z M1911.5 67.5v6l3.5-3z" fill="#b8b8b8"/></svg>
<div class="a" style="left:1627px;top:80px;width:1px;height:4px;background:#1a1a1a;"></div>
<div class="a" style="left:1629px;top:80px;width:1px;height:4px;background:#1a1a1a;"></div>
<div class="a" style="left:1631px;top:80px;width:1px;height:4px;background:#1a1a1a;"></div>
<div class="a" style="left:1633px;top:80px;width:1px;height:4px;background:#1a1a1a;"></div>
<div class="a" style="left:1635px;top:80px;width:1px;height:4px;background:#1a1a1a;"></div>
<div class="a" style="left:1637px;top:80px;width:1px;height:4px;background:#1a1a1a;"></div>
<div class="a" style="left:1639px;top:80px;width:1px;height:4px;background:#1a1a1a;"></div>
<div class="a" style="left:1641px;top:80px;width:1px;height:4px;background:#1a1a1a;"></div>
<div class="a" style="left:1643px;top:80px;width:1px;height:4px;background:#1a1a1a;"></div>
<div class="a" style="left:1645px;top:80px;width:1px;height:4px;background:#1a1a1a;"></div>
<div class="a" style="left:1622px;top:88px;width:29px;height:24px;background:#363636;border:1px solid #2e2e2e;border-radius:2px;"></div>
<svg class="a" style="left:0px;top:0px;" width="1" height="1" viewBox="0 0 1 1"><path d="M1636.5 98.5l8.5 5-8.5 5-8.5-5z" fill="#c4c4c4"/><path d="M1636.5 92l8.5 5-8.5 5-8.5-5z" fill="#dedede" stroke="#2e2e2e" stroke-width="1"/></svg>
<div class="a" style="left:1618px;top:116px;width:37px;height:1px;background:#353535;"></div>
<div class="a" style="left:1618px;top:117px;width:37px;height:1px;background:#555;"></div>
<div class="a" style="left:1658px;top:77px;width:262px;height:17px;background:#353535;"></div>
<div class="a" style="left:1658px;top:77px;width:62px;height:17px;background:#4a4a4a;border-top:1px solid #565656;"></div>
<svg class="a" style="left:0px;top:0px;" width="1" height="1" viewBox="0 0 1 1"><path d="M1663 84.0l2.75-3.5 2.75 3.5M1663 85.5l2.75 3.5 2.75-3.5" stroke="#222" stroke-width="2.2" fill="none" opacity=".6"/><path d="M1663 84.0l2.75-3.5 2.75 3.5M1663 85.5l2.75 3.5 2.75-3.5" stroke="#d8d8d8" stroke-width="1.2" fill="none"/></svg>
<div class="t" style="left:1671.6px;top:80.96px;font-size:9.5px;color:#e6e6e6;font-weight:bold;transform:scaleX(0.95);transform-origin:0 0;">Farbhilfe</div>
<svg class="a" style="left:0px;top:0px;" width="1" height="1" viewBox="0 0 1 1"><path d="M1901 83.5h5l-2.5 3z" fill="#c8c8c8"/><path d="M1907 82h8.5M1907 84.25h8.5M1907 86.5h8.5M1907 88.75h8.5" stroke="#d8d8d8" stroke-width="1.1"/></svg>
<div class="a" style="left:1663px;top:102px;width:21px;height:21px;background:#fff;border:1px solid #222;"></div>
<div class="a" style="left:1666px;top:105px;width:15px;height:15px;background:#e9581a;border:1px solid #111;"></div>
<div class="a" style="left:1691px;top:102px;width:206px;height:22px;background:#e2e2e2;border:1px solid #333;"></div>
<div class="a" style="left:1693px;top:104px;width:83px;height:18px;background:#111;"></div>
<div class="a" style="left:1709px;top:105px;width:16px;height:16px;background:#b0a6a2;"></div>
<div class="a" style="left:1725px;top:105px;width:16px;height:16px;background:#b9b5a6;"></div>
<div class="a" style="left:1741px;top:105px;width:17px;height:16px;background:#d0dccc;"></div>
<div class="a" style="left:1758px;top:105px;width:17px;height:16px;background:#8c8cb6;"></div>
<div class="a" style="left:1694px;top:105px;width:15px;height:16px;background:#fff;border:1px solid #111;"></div>
<div class="a" style="left:1896px;top:102px;width:16px;height:22px;background:linear-gradient(#5a5a5a,#4e4e4e);border:1px solid #333;"></div>
<svg class="a" style="left:0px;top:0px;" width="1" height="1" viewBox="0 0 1 1"><path d="M1900.5 111h7l-3.5 4z" fill="#d8d8d8"/></svg>
<div class="t" style="left:1681px;top:133.53px;font-size:10px;color:#e2e2e2;font-weight:bold;transform:scaleX(0.92);transform-origin:0 0;">Schattierungen</div>
<svg class="a" style="left:0px;top:0px;" width="1" height="1" viewBox="0 0 1 1"><path d="M1785.5 137h6l-3 3.5z" fill="#d8d8d8"/></svg>
<div class="t" style="left:1848px;top:133.53px;font-size:10px;color:#e2e2e2;font-weight:bold;transform:scaleX(1.03);transform-origin:0 0;">Farbtöne</div>
<div class="a" style="left:1663.5px;top:150px;width:250.5px;height:76px;background:#111;"></div>
<div class="a" style="left:1664px;top:150.5px;width:27.5px;height:15.0px;background:#1a1a1a"></div>
<div class="a" style="left:1692.5px;top:150.5px;width:27.0px;height:15.0px;background:#6a6a6a"></div>
<div class="a" style="left:1720.5px;top:150.5px;width:27.0px;height:15.0px;background:#a2a2a2"></div>
<div class="a" style="left:1748.5px;top:150.5px;width:26.5px;height:15.0px;background:#d6d6d6"></div>
<div class="a" style="left:1776px;top:150.5px;width:26.5px;height:15.0px;background:#fcfafa"></div>
<div class="a" style="left:1803.5px;top:150.5px;width:27.0px;height:15.0px;background:#fff"></div>
<div class="a" style="left:1831.5px;top:150.5px;width:27.0px;height:15.0px;background:#fff"></div>
<div class="a" style="left:1859.5px;top:150.5px;width:27.0px;height:15.0px;background:#fff"></div>
<div class="a" style="left:1887.5px;top:150.5px;width:26.0px;height:15.0px;background:#fefefe"></div>
<div class="a" style="left:1664px;top:166.5px;width:27.5px;height:14.0px;background:#1b1b1c"></div>
<div class="a" style="left:1692.5px;top:166.5px;width:27.0px;height:14.0px;background:#5e5e60"></div>
<div class="a" style="left:1720.5px;top:166.5px;width:27.0px;height:14.0px;background:#8c8c8c"></div>
<div class="a" style="left:1748.5px;top:166.5px;width:26.5px;height:14.0px;background:#a89c98"></div>
<div class="a" style="left:1776px;top:166.5px;width:26.5px;height:14.0px;background:#b8a4a4"></div>
<div class="a" style="left:1803.5px;top:166.5px;width:27.0px;height:14.0px;background:#c4b4b0"></div>
<div class="a" style="left:1831.5px;top:166.5px;width:27.0px;height:14.0px;background:#d4c4c0"></div>
<div class="a" style="left:1859.5px;top:166.5px;width:27.0px;height:14.0px;background:#ded2ce"></div>
<div class="a" style="left:1887.5px;top:166.5px;width:26.0px;height:14.0px;background:#ece8e6"></div>
<div class="a" style="left:1664px;top:181.5px;width:27.5px;height:13.5px;background:#19191a"></div>
<div class="a" style="left:1692.5px;top:181.5px;width:27.0px;height:13.5px;background:#616161"></div>
<div class="a" style="left:1720.5px;top:181.5px;width:27.0px;height:13.5px;background:#8c8c88"></div>
<div class="a" style="left:1748.5px;top:181.5px;width:26.5px;height:13.5px;background:#a9a098"></div>
<div class="a" style="left:1776px;top:181.5px;width:26.5px;height:13.5px;background:#b4b0a0"></div>
<div class="a" style="left:1803.5px;top:181.5px;width:27.0px;height:13.5px;background:#c8bcb0"></div>
<div class="a" style="left:1831.5px;top:181.5px;width:27.0px;height:13.5px;background:#d6cec2"></div>
<div class="a" style="left:1859.5px;top:181.5px;width:27.0px;height:13.5px;background:#e0dcd0"></div>
<div class="a" style="left:1887.5px;top:181.5px;width:26.0px;height:13.5px;background:#eeecea"></div>
<div class="a" style="left:1664px;top:196px;width:27.5px;height:14px;background:#19191a"></div>
<div class="a" style="left:1692.5px;top:196px;width:27.0px;height:14px;background:#666666"></div>
<div class="a" style="left:1720.5px;top:196px;width:27.0px;height:14px;background:#909890"></div>
<div class="a" style="left:1748.5px;top:196px;width:26.5px;height:14px;background:#a8bca8"></div>
<div class="a" style="left:1776px;top:196px;width:26.5px;height:14px;background:#c4dcc4"></div>
<div class="a" style="left:1803.5px;top:196px;width:27.0px;height:14px;background:#d4e4d4"></div>
<div class="a" style="left:1831.5px;top:196px;width:27.0px;height:14px;background:#e4f0e4"></div>
<div class="a" style="left:1859.5px;top:196px;width:27.0px;height:14px;background:#f0f4ec"></div>
<div class="a" style="left:1887.5px;top:196px;width:26.0px;height:14px;background:#f6f9f6"></div>
<div class="a" style="left:1664px;top:211px;width:27.5px;height:14px;background:#19191b"></div>
<div class="a" style="left:1692.5px;top:211px;width:27.0px;height:14px;background:#606064"></div>
<div class="a" style="left:1720.5px;top:211px;width:27.0px;height:14px;background:#7c7c8c"></div>
<div class="a" style="left:1748.5px;top:211px;width:26.5px;height:14px;background:#8c8ca6"></div>
<div class="a" style="left:1776px;top:211px;width:26.5px;height:14px;background:#8c8cb8"></div>
<div class="a" style="left:1803.5px;top:211px;width:27.0px;height:14px;background:#a8a8c8"></div>
<div class="a" style="left:1831.5px;top:211px;width:27.0px;height:14px;background:#c0c0d8"></div>
<div class="a" style="left:1859.5px;top:211px;width:27.0px;height:14px;background:#d8d8e8"></div>
<div class="a" style="left:1887.5px;top:211px;width:26.0px;height:14px;background:#e8e8ee"></div>
<svg class="a" style="left:0px;top:0px;" width="1" height="1" viewBox="0 0 1 1"><rect x="1669" y="232" width="13" height="10" fill="#c8c8c8" stroke="#333" stroke-width=".8"/><path d="M1673.3 232v10M1677.6 232v10M1669 237h13" stroke="#555" stroke-width="1"/><rect x="1673.8" y="232.5" width="3.3" height="9" fill="#a8a8a8"/><path d="M1683 240h5l-2.5 3z" fill="#c8c8c8"/></svg>
<div class="t r" style="left:1695px;top:232.03px;font-size:10px;color:#e2e2e2;transform:scaleX(0.97);transform-origin:0 0;">Ohne</div>
<svg class="a" style="left:0px;top:0px;" width="1" height="1" viewBox="0 0 1 1"><circle cx="1859.8" cy="237.8" r="5.8" fill="#8a8a8a" stroke="#c8c8c8" stroke-width="1.1"/><path d="M1859.8 232v11.6M1854 237.8h11.6M1855.7 233.7l8.2 8.2M1863.9 233.7l-8.2 8.2" stroke="#555" stroke-width=".9"/><circle cx="1859.8" cy="237.8" r="1.6" fill="#333"/><rect x="1882" y="232.5" width="12" height="9.5" fill="#bdbdbd" stroke="#444" stroke-width=".6"/><path d="M1886 232.5v9.5M1890 232.5v9.5" stroke="#777"/><path d="M1877.5 240.5h6M1880.5 237.5v6" stroke="#e4e4e4" stroke-width="1.8"/></svg>
<svg class="a" style="left:0px;top:0px;" width="1" height="1" viewBox="0 0 1 1"><rect x="1914" y="238" width="1" height="1" fill="#1e1e1e"/><rect x="1912" y="240" width="1" height="1" fill="#1e1e1e"/><rect x="1914" y="240" width="1" height="1" fill="#1e1e1e"/><rect x="1910" y="242" width="1" height="1" fill="#1e1e1e"/><rect x="1912" y="242" width="1" height="1" fill="#1e1e1e"/><rect x="1914" y="242" width="1" height="1" fill="#1e1e1e"/><rect x="1908" y="244" width="1" height="1" fill="#1e1e1e"/><rect x="1910" y="244" width="1" height="1" fill="#1e1e1e"/><rect x="1912" y="244" width="1" height="1" fill="#1e1e1e"/><rect x="1914" y="244" width="1" height="1" fill="#1e1e1e"/><rect x="1906" y="246" width="1" height="1" fill="#1e1e1e"/><rect x="1908" y="246" width="1" height="1" fill="#1e1e1e"/><rect x="1910" y="246" width="1" height="1" fill="#1e1e1e"/><rect x="1912" y="246" width="1" height="1" fill="#1e1e1e"/><rect x="1914" y="246" width="1" height="1" fill="#1e1e1e"/></svg>
<div class="a" style="left:1658px;top:247px;width:262px;height:2px;background:#2a2a2a;"></div>
<div class="a" style="left:1658px;top:250px;width:262px;height:17px;background:#353535;"></div>
<div class="a" style="left:1658px;top:250px;width:55px;height:17px;background:#4a4a4a;border-top:1px solid #565656;"></div>
<svg class="a" style="left:0px;top:0px;" width="1" height="1" viewBox="0 0 1 1"><path d="M1663 257.0l2.75-3.5 2.75 3.5M1663 258.5l2.75 3.5 2.75-3.5" stroke="#222" stroke-width="2.2" fill="none" opacity=".6"/><path d="M1663 257.0l2.75-3.5 2.75 3.5M1663 258.5l2.75 3.5 2.75-3.5" stroke="#d8d8d8" stroke-width="1.2" fill="none"/></svg>
<div class="t" style="left:1671.6px;top:253.96px;font-size:9.5px;color:#e6e6e6;font-weight:bold;transform:scaleX(0.96);transform-origin:0 0;">Verlauf</div>
<svg class="a" style="left:0px;top:0px;" width="1" height="1" viewBox="0 0 1 1"><path d="M1901 256.5h5l-2.5 3z" fill="#c8c8c8"/><path d="M1907 255h8.5M1907 257.25h8.5M1907 259.5h8.5M1907 261.75h8.5" stroke="#d8d8d8" stroke-width="1.1"/></svg>
<div class="a" style="left:1664px;top:274px;width:30px;height:30px;background:rgba(0,0,0,.35);"></div>
<div class="a" style="left:1664.5px;top:274.5px;width:28px;height:28px;background:linear-gradient(90deg,#fff,#111);border:1px solid #333;"></div>
<svg class="a" style="left:0px;top:0px;" width="1" height="1" viewBox="0 0 1 1"><path d="M1698 287.5h5l-2.5 3z" fill="#d8d8d8"/></svg>
<div class="t r" style="left:1731px;top:280.04px;font-size:10px;color:#e4e4e4;transform:scaleX(0.92);transform-origin:0 0;">Art:</div>
<div class="a" style="left:1752.5px;top:274.5px;width:160px;height:18px;background:#6a6a6a;border:1px solid #333;"></div>
<div class="a" style="left:1894px;top:275px;width:1px;height:17px;background:#555;"></div>
<svg class="a" style="left:0px;top:0px;" width="1" height="1" viewBox="0 0 1 1"><path d="M1899.5 281.5h7l-3.5 4z" fill="#e4e4e4"/></svg>
<div class="t r" style="left:1712.5px;top:305.04px;font-size:10px;color:#7e7e7e;transform:scaleX(1.05);transform-origin:0 0;">Kontur:</div>
<div class="a" style="left:1752.5px;top:301px;width:69px;height:18px;background:#555;border:1px solid #3a3a3a;"></div>
<div class="a" style="left:1775.5px;top:301px;width:1px;height:18px;background:#3a3a3a;"></div>
<div class="a" style="left:1798.5px;top:301px;width:1px;height:18px;background:#3a3a3a;"></div>
<svg class="a" style="left:0px;top:0px;" width="1" height="1" viewBox="0 0 1 1"><path d="M1757 316v-11h9v3h-5v8M1780 316v-11h9v3h-5v8M1803 316v-11h9v3h-5v8" stroke="#777" fill="none"/></svg>
<div class="a" style="left:1674.5px;top:320.5px;width:19px;height:19px;background:#fff;border:1px solid #333;"></div>
<div class="a" style="left:1678.5px;top:324.5px;width:11px;height:11px;background:#4a4a4a;"></div>
<svg class="a" style="left:0px;top:0px;" width="1" height="1" viewBox="0 0 1 1"><path d="M1675 339l18-18" stroke="#d4143a" stroke-width="2"/></svg>
<div class="a" style="left:1664.5px;top:311px;width:19px;height:18px;background:#e2661f;border:1px solid #f4e6bc;"></div>
<svg class="a" style="left:0px;top:0px;" width="1" height="1" viewBox="0 0 1 1"><path d="M1734 340.5l5.5-6.5 5.5 6.5z" fill="none" stroke="#7a7a7a"/><path d="M1671 352h9v7h-9zM1676 357h11v7h-11z" fill="none" stroke="#7a7a7a"/><path d="M1681 354h4l-2 2z" fill="#7a7a7a"/></svg>
<div class="a" style="left:1752.5px;top:327.5px;width:67px;height:18px;background:#6a6a6a;border:1px solid #333;"></div>
<div class="a" style="left:1804.5px;top:327.5px;width:1px;height:18px;background:#3a3a3a;"></div>
<svg class="a" style="left:0px;top:0px;" width="1" height="1" viewBox="0 0 1 1"><path d="M1808.5 334.5h7l-3.5 4z" fill="#8a8a8a"/></svg>
<svg class="a" style="left:0px;top:0px;" width="1" height="1" viewBox="0 0 1 1"><path d="M1737 355v15M1735 355h4M1735 370h4" stroke="#7a7a7a"/><ellipse cx="1743" cy="362.5" rx="4" ry="3.5" fill="none" stroke="#7a7a7a"/></svg>
<div class="a" style="left:1752.5px;top:353.5px;width:67px;height:18px;background:#6a6a6a;border:1px solid #333;"></div>
<div class="a" style="left:1804.5px;top:353.5px;width:1px;height:18px;background:#3a3a3a;"></div>
<svg class="a" style="left:0px;top:0px;" width="1" height="1" viewBox="0 0 1 1"><path d="M1808.5 360.5h7l-3.5 4z" fill="#8a8a8a"/></svg>
<div class="a" style="left:1668.5px;top:386.5px;width:216px;height:18px;background:linear-gradient(90deg,#fff 0%,#dcdcdc 20%,#c0c4c8 32%,#9a9a9a 52%,#666 72%,#2a2a2a 92%,#000 100%);border:1px solid #333;"></div>
<svg class="a" style="left:0px;top:0px;" width="1" height="1" viewBox="0 0 1 1"><path d="M1896 393h11" stroke="#6e6e6e" stroke-width="1.4"/><path d="M1899.5 392.5v-1.5h4v1.5" stroke="#6e6e6e" fill="none"/><path d="M1897 395h9l-1 8.5h-7z" fill="none" stroke="#6e6e6e"/><path d="M1899.5 396v7M1901.5 396v7M1903.5 396v7" stroke="#6e6e6e" stroke-width=".8"/></svg>
<div class="t r" style="left:1702px;top:437.04px;font-size:10px;color:#7a7a7a;transform:scaleX(0.99);transform-origin:0 0;">Deckkraft:</div>
<div class="a" style="left:1752.5px;top:433px;width:67px;height:18px;background:#6a6a6a;border:1px solid #333;"></div>
<div class="a" style="left:1804.5px;top:433px;width:1px;height:18px;background:#3a3a3a;"></div>
<svg class="a" style="left:0px;top:0px;" width="1" height="1" viewBox="0 0 1 1"><path d="M1808.5 440.0h7l-3.5 4z" fill="#8a8a8a"/></svg>
<div class="t r" style="left:1709px;top:463.04px;font-size:10px;color:#7a7a7a;transform:scaleX(0.98);transform-origin:0 0;">Position:</div>
<div class="a" style="left:1752.5px;top:459px;width:67px;height:18px;background:#6a6a6a;border:1px solid #333;"></div>
<div class="a" style="left:1804.5px;top:459px;width:1px;height:18px;background:#3a3a3a;"></div>
<svg class="a" style="left:0px;top:0px;" width="1" height="1" viewBox="0 0 1 1"><path d="M1808.5 466.0h7l-3.5 4z" fill="#8a8a8a"/></svg>
<svg class="a" style="left:0px;top:0px;" width="1" height="1" viewBox="0 0 1 1"><rect x="1916" y="472" width="1" height="1" fill="#1e1e1e"/><rect x="1914" y="474" width="1" height="1" fill="#1e1e1e"/><rect x="1916" y="474" width="1" height="1" fill="#1e1e1e"/><rect x="1912" y="476" width="1" height="1" fill="#1e1e1e"/><rect x="1914" y="476" width="1" height="1" fill="#1e1e1e"/><rect x="1916" y="476" width="1" height="1" fill="#1e1e1e"/><rect x="1910" y="478" width="1" height="1" fill="#1e1e1e"/><rect x="1912" y="478" width="1" height="1" fill="#1e1e1e"/><rect x="1914" y="478" width="1" height="1" fill="#1e1e1e"/><rect x="1916" y="478" width="1" height="1" fill="#1e1e1e"/><rect x="1908" y="480" width="1" height="1" fill="#1e1e1e"/><rect x="1910" y="480" width="1" height="1" fill="#1e1e1e"/><rect x="1912" y="480" width="1" height="1" fill="#1e1e1e"/><rect x="1914" y="480" width="1" height="1" fill="#1e1e1e"/><rect x="1916" y="480" width="1" height="1" fill="#1e1e1e"/></svg>
<div class="a" style="left:1658px;top:483px;width:262px;height:2px;background:#2a2a2a;"></div>
<div class="a" style="left:1658px;top:486px;width:262px;height:17px;background:#353535;"></div>
<div class="a" style="left:1658px;top:486px;width:62px;height:17px;background:#4a4a4a;border-top:1px solid #565656;"></div>
<div class="t" style="left:1665.5px;top:489.96px;font-size:9.5px;color:#e6e6e6;font-weight:bold;transform:scaleX(0.94);transform-origin:0 0;">Farbfelder</div>
<svg class="a" style="left:0px;top:0px;" width="1" height="1" viewBox="0 0 1 1"><path d="M1901 492.5h5l-2.5 3z" fill="#c8c8c8"/><path d="M1907 491h8.5M1907 493.25h8.5M1907 495.5h8.5M1907 497.75h8.5" stroke="#d8d8d8" stroke-width="1.1"/></svg>
<div class="a" style="left:1673.5px;top:519.5px;width:19px;height:19px;background:#fff;border:1px solid #333;"></div>
<div class="a" style="left:1677.5px;top:523.5px;width:11px;height:11px;background:#4a4a4a;"></div>
<svg class="a" style="left:0px;top:0px;" width="1" height="1" viewBox="0 0 1 1"><path d="M1674 538l18-18" stroke="#d4143a" stroke-width="2"/></svg>
<div class="a" style="left:1664px;top:510px;width:19px;height:18px;background:#e2661f;border:1px solid #f4e6bc;"></div>
<div class="a" style="left:1862px;top:510px;width:51px;height:22px;background:#3a3a3a;border:1px solid #2e2e2e;border-radius:2px;"></div>
<div class="a" style="left:1863px;top:511px;width:24px;height:20px;background:#505050;"></div>
<svg class="a" style="left:0px;top:0px;" width="1" height="1" viewBox="0 0 1 1"><path d="M1868 515.5h13M1868 519.5h13M1868 523.5h13M1868 527.5h13" stroke="#d8d8d8" stroke-width="1.8"/></svg>
<svg class="a" style="left:0px;top:0px;" width="1" height="1" viewBox="0 0 1 1"><rect x="1893.0" y="514.0" width="3.2" height="3.2" fill="#d8d8d8"/><rect x="1893.0" y="518.3" width="3.2" height="3.2" fill="#d8d8d8"/><rect x="1893.0" y="522.6" width="3.2" height="3.2" fill="#d8d8d8"/><rect x="1897.3" y="514.0" width="3.2" height="3.2" fill="#d8d8d8"/><rect x="1897.3" y="518.3" width="3.2" height="3.2" fill="#d8d8d8"/><rect x="1897.3" y="522.6" width="3.2" height="3.2" fill="#d8d8d8"/><rect x="1901.6" y="514.0" width="3.2" height="3.2" fill="#d8d8d8"/><rect x="1901.6" y="518.3" width="3.2" height="3.2" fill="#d8d8d8"/><rect x="1901.6" y="522.6" width="3.2" height="3.2" fill="#d8d8d8"/></svg>
<div class="a" style="left:1663px;top:544px;width:251px;height:93px;background:#474747;border:1px solid #333;"></div>
<div class="a" style="left:1901px;top:545px;width:12px;height:91px;background:#3e3e3e;"></div>
<svg class="a" style="left:0px;top:0px;" width="1" height="1" viewBox="0 0 1 1"><path d="M1903.5 553l3.5-4 3.5 4z M1903.5 626l3.5 4 3.5-4z" fill="#707070"/></svg>
<svg class="a" style="left:0px;top:0px;" width="1" height="1" viewBox="0 0 1 1"><defs><linearGradient id="sg1"><stop offset="0" stop-color="#fff"/><stop offset="1" stop-color="#000"/></linearGradient><radialGradient id="sr1"><stop offset="0" stop-color="#eee"/><stop offset="1" stop-color="#222"/></radialGradient><linearGradient id="sg2"><stop offset="0" stop-color="#b87838"/><stop offset=".5" stop-color="#f4d8a0"/><stop offset="1" stop-color="#8a5030"/></linearGradient><radialGradient id="sr2"><stop offset="0" stop-color="#f8e0a0"/><stop offset=".6" stop-color="#a0601e"/><stop offset="1" stop-color="#3a1a08"/></radialGradient></defs><rect x="1664.0" y="545" width="13.2" height="13.3" fill="#fff"/><path d="M1664.0 558.3L1677.2 545" stroke="#d4143a" stroke-width="1.4"/><rect x="1677.95" y="545" width="13.2" height="13.3" fill="#fff"/><circle cx="1684.55" cy="551.6" r="4" fill="none" stroke="#222" stroke-width=".9"/><circle cx="1684.55" cy="551.6" r="1.6" fill="none" stroke="#222" stroke-width=".9"/><path d="M1678.95 551.6h11.2M1684.55 546v11.2" stroke="#222" stroke-width=".8"/><rect x="1691.9" y="545" width="13.2" height="13.3" fill="#ffffff"/><rect x="1705.85" y="545" width="13.2" height="13.3" fill="#000000"/><rect x="1719.8" y="545" width="13.2" height="13.3" fill="#e4001c"/><rect x="1733.75" y="545" width="13.2" height="13.3" fill="#ffec00"/><rect x="1747.7" y="545" width="13.2" height="13.3" fill="#009a3e"/><rect x="1761.65" y="545" width="13.2" height="13.3" fill="#00a0e3"/><rect x="1775.6" y="545" width="13.2" height="13.3" fill="#1d2c87"/><rect x="1789.55" y="545" width="13.2" height="13.3" fill="#e3007d"/><rect x="1803.5" y="545" width="13.2" height="13.3" fill="#c8102e"/><rect x="1817.45" y="545" width="13.2" height="13.3" fill="#e2352a"/><rect x="1831.4" y="545" width="13.2" height="13.3" fill="#e85a1c"/><rect x="1845.35" y="545" width="13.2" height="13.3" fill="#f09a12"/><rect x="1859.3" y="545" width="13.2" height="13.3" fill="#f2b131"/><rect x="1873.25" y="545" width="13.2" height="13.3" fill="#f6e100"/><rect x="1664.0" y="559" width="13.2" height="13.3" fill="#dde31c"/><rect x="1677.95" y="559" width="13.2" height="13.3" fill="#a2c41e"/><rect x="1691.9" y="559" width="13.2" height="13.3" fill="#4eab2e"/><rect x="1705.85" y="559" width="13.2" height="13.3" fill="#2e9a3a"/><rect x="1719.8" y="559" width="13.2" height="13.3" fill="#207a3e"/><rect x="1733.75" y="559" width="13.2" height="13.3" fill="#52b06e"/><rect x="1747.7" y="559" width="13.2" height="13.3" fill="#2aa6a0"/><rect x="1761.65" y="559" width="13.2" height="13.3" fill="#52a9e0"/><rect x="1775.6" y="559" width="13.2" height="13.3" fill="#2c76be"/><rect x="1789.55" y="559" width="13.2" height="13.3" fill="#1d3a8d"/><rect x="1803.5" y="559" width="13.2" height="13.3" fill="#1c2c72"/><rect x="1817.45" y="559" width="13.2" height="13.3" fill="#5b2c8e"/><rect x="1831.4" y="559" width="13.2" height="13.3" fill="#8b1e8c"/><rect x="1845.35" y="559" width="13.2" height="13.3" fill="#a11a6e"/><rect x="1859.3" y="559" width="13.2" height="13.3" fill="#d0145c"/><rect x="1873.25" y="559" width="13.2" height="13.3" fill="#e01e80"/><rect x="1664.0" y="573" width="13.2" height="13.3" fill="#cbbba0"/><rect x="1677.95" y="573" width="13.2" height="13.3" fill="#a99584"/><rect x="1691.9" y="573" width="13.2" height="13.3" fill="#8a7866"/><rect x="1705.85" y="573" width="13.2" height="13.3" fill="#6a5646"/><rect x="1719.8" y="573" width="13.2" height="13.3" fill="#c89f6c"/><rect x="1733.75" y="573" width="13.2" height="13.3" fill="#b7874e"/><rect x="1747.7" y="573" width="13.2" height="13.3" fill="#a06c3a"/><rect x="1761.65" y="573" width="13.2" height="13.3" fill="#8a5426"/><rect x="1775.6" y="573" width="13.2" height="13.3" fill="#7a461e"/><rect x="1789.55" y="573" width="13.2" height="13.3" fill="#4f3120"/><rect x="1803.5" y="573" width="13.2" height="13.3" fill="url(#sg1)"/><rect x="1817.45" y="573" width="13.2" height="13.3" fill="#000000"/><rect x="1831.4" y="573" width="13.2" height="13.3" fill="#000"/><circle cx="1838.0" cy="579.6" r="5.5" fill="url(#sr1)"/><rect x="1845.35" y="573" width="13.2" height="13.3" fill="#000000"/><rect x="1859.3" y="573" width="13.2" height="13.3" fill="url(#sg2)"/><rect x="1873.25" y="573" width="13.2" height="13.3" fill="url(#sr2)"/><rect x="1664.0" y="587" width="13.2" height="13.3" fill="#c8141c"/><path d="M1666.0 591c3-2 5 2 8-1M1667.0 595c2 1 4-2 7 1" stroke="#f0a020" stroke-width="1.2" fill="none"/><rect x="1677.95" y="587" width="13.2" height="13.3" fill="#f08c10"/><path d="M1681.95 600.3L1691.15 591.5V600.3z" fill="#fff"/><path d="M1681.95 600.3L1691.15 591.5" stroke="#000" stroke-width="1"/><circle cx="1687.45" cy="597" r="1.1" fill="#000"/><rect x="1691.9" y="587" width="13.2" height="13.3" fill="#a4a4a4"/><path d="M1695.9 600.3L1705.1000000000001 591.5V600.3z" fill="#fff"/><path d="M1695.9 600.3L1705.1000000000001 591.5" stroke="#000" stroke-width="1"/><circle cx="1701.4" cy="597" r="1.1" fill="#000"/><rect x="1705.85" y="587" width="13.2" height="13.3" fill="#2e3a30"/><path d="M1709.85 600.3L1719.05 591.5V600.3z" fill="#fff"/><path d="M1709.85 600.3L1719.05 591.5" stroke="#000" stroke-width="1"/><circle cx="1715.35" cy="597" r="1.1" fill="#000"/><rect x="1719.8" y="587" width="13.2" height="13.3" fill="#a8b0a8"/><path d="M1723.8 600.3L1733.0 591.5V600.3z" fill="#fff"/><path d="M1723.8 600.3L1733.0 591.5" stroke="#000" stroke-width="1"/><circle cx="1729.3" cy="597" r="1.1" fill="#000"/><rect x="1733.75" y="587" width="13.2" height="13.3" fill="#000000"/><rect x="1747.7" y="587" width="13.2" height="13.3" fill="#3e3e3e"/><rect x="1761.65" y="587" width="13.2" height="13.3" fill="#5c5c5c"/><rect x="1775.6" y="587" width="13.2" height="13.3" fill="#6e6e6e"/><rect x="1789.55" y="587" width="13.2" height="13.3" fill="#8a8a8a"/><rect x="1803.5" y="587" width="13.2" height="13.3" fill="#a0a0a0"/><rect x="1817.45" y="587" width="13.2" height="13.3" fill="#b4b4b4"/><rect x="1831.4" y="587" width="13.2" height="13.3" fill="#c6c6c6"/><rect x="1845.35" y="587" width="13.2" height="13.3" fill="#d6d6d6"/><rect x="1859.3" y="587" width="13.2" height="13.3" fill="#e6e6e6"/><rect x="1873.25" y="587" width="13.2" height="13.3" fill="#f2f2f2"/><rect x="1664.0" y="601" width="13.2" height="13.3" fill="#e10f2d"/><rect x="1677.95" y="601" width="13.2" height="13.3" fill="#fff"/><rect x="1679.45" y="602.5" width="10.2" height="10.3" fill="#e2661f" stroke="#111" stroke-width="1.2"/><rect x="1691.9" y="601" width="13.2" height="13.3" fill="#f8d700"/><rect x="1705.85" y="601" width="13.2" height="13.3" fill="#2e9e36"/><rect x="1719.8" y="601" width="13.2" height="13.3" fill="#1c3aa0"/><rect x="1733.75" y="601" width="13.2" height="13.3" fill="#7c2ea0"/></svg>
<svg class="a" style="left:0px;top:0px;" width="1" height="1" viewBox="0 0 1 1"><path d="M1667.5 642v9M1670 642v9" stroke="#c8c8c8" stroke-width="1.5"/><path d="M1672 642l4 9" stroke="#c8c8c8" stroke-width="1.5"/><path d="M1678 650h4l-2 2.5z" fill="#c8c8c8"/><circle cx="1701" cy="647" r="2.5" fill="none" stroke="#c8c8c8" stroke-width="1.3"/><circle cx="1705" cy="643" r="1.3" fill="#c8c8c8"/><circle cx="1705" cy="651" r="1.3" fill="#c8c8c8"/><path d="M1703 645.5l2-2M1703 648.5l2 2" stroke="#c8c8c8"/><rect x="1774" y="641" width="10" height="10" fill="#c8c8c8"/><path d="M1777.3 641v10M1780.6 641v10M1774 644.3h10M1774 647.6h10" stroke="#4a4a4a" stroke-width=".8"/><rect x="1781" y="644.8" width="2.4" height="2.4" fill="#111"/><rect x="1774.5" y="648.2" width="2.4" height="2.4" fill="#111"/><path d="M1785 649h5l-2.5 3z" fill="#c8c8c8"/><rect x="1802" y="641.5" width="10" height="10" fill="#3a3a3a" stroke="#c8c8c8"/><path d="M1804 644h1M1806 644h4.5M1804 646.5h1M1806 646.5h4.5M1804 649h1M1806 649h4.5" stroke="#d0d0d0" stroke-width="1"/><path d="M1828 644h4l1 1.5h6v7h-11z" fill="#c8c8c8"/><path d="M1854.5 641.5h10.5v10h-10.5z" fill="#cfcfcf"/><path d="M1854 647.5v4.5h4.5z" fill="#4a4a4a"/><path d="M1855 648.5l3 3" stroke="#bbb" stroke-width=".8"/><path d="M1880 643.5h11" stroke="#d0d0d0" stroke-width="1.5"/><path d="M1883.5 643v-1.5h4v1.5" stroke="#d0d0d0" fill="none"/><path d="M1881 645h9l-1 8h-7z" fill="none" stroke="#d0d0d0" stroke-width="1.2"/><path d="M1883.5 646v6M1885.5 646v6M1887.5 646v6" stroke="#d0d0d0" stroke-width=".9"/></svg>
<svg class="a" style="left:0px;top:0px;" width="1" height="1" viewBox="0 0 1 1"><rect x="1914" y="646" width="1" height="1" fill="#1e1e1e"/><rect x="1912" y="648" width="1" height="1" fill="#1e1e1e"/><rect x="1914" y="648" width="1" height="1" fill="#1e1e1e"/><rect x="1910" y="650" width="1" height="1" fill="#1e1e1e"/><rect x="1912" y="650" width="1" height="1" fill="#1e1e1e"/><rect x="1914" y="650" width="1" height="1" fill="#1e1e1e"/><rect x="1908" y="652" width="1" height="1" fill="#1e1e1e"/><rect x="1910" y="652" width="1" height="1" fill="#1e1e1e"/><rect x="1912" y="652" width="1" height="1" fill="#1e1e1e"/><rect x="1914" y="652" width="1" height="1" fill="#1e1e1e"/><rect x="1906" y="654" width="1" height="1" fill="#1e1e1e"/><rect x="1908" y="654" width="1" height="1" fill="#1e1e1e"/><rect x="1910" y="654" width="1" height="1" fill="#1e1e1e"/><rect x="1912" y="654" width="1" height="1" fill="#1e1e1e"/><rect x="1914" y="654" width="1" height="1" fill="#1e1e1e"/></svg>
<div class="a" style="left:1658px;top:656px;width:262px;height:2px;background:#2a2a2a;"></div>
<div class="a" style="left:1658px;top:659px;width:262px;height:17px;background:#353535;"></div>
<div class="a" style="left:1658px;top:659px;width:46px;height:17px;background:#4a4a4a;border-top:1px solid #565656;"></div>
<svg class="a" style="left:0px;top:0px;" width="1" height="1" viewBox="0 0 1 1"><path d="M1663 666.0l2.75-3.5 2.75 3.5M1663 667.5l2.75 3.5 2.75-3.5" stroke="#222" stroke-width="2.2" fill="none" opacity=".6"/><path d="M1663 666.0l2.75-3.5 2.75 3.5M1663 667.5l2.75 3.5 2.75-3.5" stroke="#d8d8d8" stroke-width="1.2" fill="none"/></svg>
<div class="t" style="left:1671.6px;top:662.96px;font-size:9.5px;color:#e6e6e6;font-weight:bold;transform:scaleX(0.96);transform-origin:0 0;">Farbe</div>
<svg class="a" style="left:0px;top:0px;" width="1" height="1" viewBox="0 0 1 1"><path d="M1901 665.5h5l-2.5 3z" fill="#c8c8c8"/><path d="M1907 664h8.5M1907 666.25h8.5M1907 668.5h8.5M1907 670.75h8.5" stroke="#d8d8d8" stroke-width="1.1"/></svg>
<svg class="a" style="left:0px;top:0px;" width="1" height="1" viewBox="0 0 1 1"><rect x="1667" y="687" width="8" height="8" fill="#222" stroke="#bbb"/><rect x="1663.5" y="683.5" width="8" height="8" fill="#e8e8e8" stroke="#222"/><path d="M1684 686l2.5-2.5v1.5h2.5c1.5 0 2.5 1 2.5 2.5v2.5h1.5l-2.5 3-2.5-3h1.5v-2.2c0-.5-.2-.8-.8-.8h-2.2v1.5z" fill="#d4d4d4"/></svg>
<div class="a" style="left:1673.5px;top:710px;width:19px;height:19px;background:#fff;border:1px solid #333;"></div>
<div class="a" style="left:1677.5px;top:714px;width:11px;height:11px;background:#4a4a4a;"></div>
<svg class="a" style="left:0px;top:0px;" width="1" height="1" viewBox="0 0 1 1"><path d="M1674 728.5l18-18" stroke="#d4143a" stroke-width="2"/></svg>
<div class="a" style="left:1664px;top:701px;width:18.5px;height:18px;background:#e2661f;border:1px solid #f4e6bc;"></div>
<svg class="a" style="left:0px;top:0px;" width="1" height="1" viewBox="0 0 1 1"><path d="M1674.5 745l5 2.5v6l-5 2.5-5-2.5v-6z M1669.5 747.5l5 2.5 5-2.5M1674.5 750v6" fill="none" stroke="#9a9a9a" stroke-width="1.1"/></svg>
<div class="a" style="left:1687.5px;top:744px;width:14px;height:13.5px;background:#e2661f;border:1px solid #f4e6bc;"></div>
<div class="t r" style="left:1709.5px;top:689.61px;font-size:10.5px;color:#d4d4d4;transform:scaleX(1.0);transform-origin:0 0;">C</div>
<div class="a" style="left:1728.5px;top:692.5px;width:102.5px;height:5px;background:linear-gradient(90deg,#e8661e,#2a5a3a);box-shadow:0 0 0 1px #3a3a3a;border-radius:1px;"></div>
<svg class="a" style="left:0px;top:0px;" width="1" height="1" viewBox="0 0 1 1"><path d="M1724.5 704.5v-3l4-3.5 4 3.5v3z" fill="#cfcfcf" stroke="#333" stroke-width=".6"/></svg>
<div class="a" style="left:1837.5px;top:686px;width:33px;height:17.5px;background:#b0b0b0;border:1px solid #333;"></div>
<div class="t" style="left:1840.5px;top:691.03px;font-size:10px;color:#111;transform:scaleX(0.95);transform-origin:0 0;">0</div>
<div class="t r" style="left:1873px;top:691.03px;font-size:10px;color:#d8d8d8;">%</div>
<div class="t r" style="left:1709.5px;top:714.61px;font-size:10.5px;color:#d4d4d4;transform:scaleX(1.0);transform-origin:0 0;">M</div>
<div class="a" style="left:1728.5px;top:717.5px;width:102.5px;height:5px;background:linear-gradient(90deg,#f0f020,#f0a020 50%,#e82828);box-shadow:0 0 0 1px #3a3a3a;border-radius:1px;"></div>
<svg class="a" style="left:0px;top:0px;" width="1" height="1" viewBox="0 0 1 1"><path d="M1800 729.5v-3l4-3.5 4 3.5v3z" fill="#cfcfcf" stroke="#333" stroke-width=".6"/></svg>
<div class="a" style="left:1837.5px;top:711px;width:33px;height:17.5px;background:#b0b0b0;border:1px solid #333;"></div>
<div class="t" style="left:1840.5px;top:716.03px;font-size:10px;color:#111;transform:scaleX(0.95);transform-origin:0 0;">75</div>
<div class="t r" style="left:1873px;top:716.03px;font-size:10px;color:#d8d8d8;">%</div>
<div class="t r" style="left:1709.5px;top:739.61px;font-size:10.5px;color:#d4d4d4;transform:scaleX(1.0);transform-origin:0 0;">Y</div>
<div class="a" style="left:1728.5px;top:742.5px;width:102.5px;height:5px;background:linear-gradient(90deg,#e04a8a,#e85a40 50%,#f06a1a);box-shadow:0 0 0 1px #3a3a3a;border-radius:1px;"></div>
<svg class="a" style="left:0px;top:0px;" width="1" height="1" viewBox="0 0 1 1"><path d="M1826 754.5v-3l4-3.5 4 3.5v3z" fill="#cfcfcf" stroke="#333" stroke-width=".6"/></svg>
<div class="a" style="left:1837.5px;top:736px;width:33px;height:17.5px;background:#b0b0b0;border:1px solid #333;"></div>
<div class="t" style="left:1840.5px;top:741.03px;font-size:10px;color:#111;transform:scaleX(0.95);transform-origin:0 0;">100</div>
<div class="t r" style="left:1873px;top:741.03px;font-size:10px;color:#d8d8d8;">%</div>
<div class="t r" style="left:1709.5px;top:764.61px;font-size:10.5px;color:#d4d4d4;transform:scaleX(1.0);transform-origin:0 0;">K</div>
<div class="a" style="left:1728.5px;top:767.5px;width:102.5px;height:5px;background:linear-gradient(90deg,#e8661e,#2a1408);box-shadow:0 0 0 1px #3a3a3a;border-radius:1px;"></div>
<svg class="a" style="left:0px;top:0px;" width="1" height="1" viewBox="0 0 1 1"><path d="M1724.5 779.5v-3l4-3.5 4 3.5v3z" fill="#cfcfcf" stroke="#333" stroke-width=".6"/></svg>
<div class="a" style="left:1837.5px;top:761px;width:33px;height:17.5px;background:#b0b0b0;border:1px solid #333;"></div>
<div class="t" style="left:1840.5px;top:766.03px;font-size:10px;color:#111;transform:scaleX(0.95);transform-origin:0 0;">0</div>
<div class="t r" style="left:1873px;top:766.03px;font-size:10px;color:#d8d8d8;">%</div>
<div class="a" style="left:1663.5px;top:790.5px;width:13px;height:13px;background:#fff;"></div>
<svg class="a" style="left:0px;top:0px;" width="1" height="1" viewBox="0 0 1 1"><path d="M1663.5 803.5l13-13" stroke="#d4143a" stroke-width="1.6"/></svg>
<div class="a" style="left:1676.5px;top:790.5px;width:13px;height:13px;background:#000;"></div>
<div class="a" style="left:1689.5px;top:790.5px;width:13px;height:13px;background:#fff;"></div>
<div class="a" style="left:1664.5px;top:814.5px;width:237px;height:22px;background:linear-gradient(90deg,#e0002a 0%,#f6e31a 17%,#7cc530 33%,#50c8e6 50%,#2e3b98 67%,#b82c8c 83%,#e3004a 100%);border:1px solid #222;"></div>
<div class="a" style="left:1665.5px;top:815.5px;width:235px;height:20px;background:linear-gradient(#fff 0%,rgba(255,255,255,0) 45%,rgba(0,0,0,0) 55%,#000 100%);"></div>
<svg class="a" style="left:0px;top:0px;" width="1" height="1" viewBox="0 0 1 1"><rect x="1914" y="832" width="1" height="1" fill="#1e1e1e"/><rect x="1912" y="834" width="1" height="1" fill="#1e1e1e"/><rect x="1914" y="834" width="1" height="1" fill="#1e1e1e"/><rect x="1910" y="836" width="1" height="1" fill="#1e1e1e"/><rect x="1912" y="836" width="1" height="1" fill="#1e1e1e"/><rect x="1914" y="836" width="1" height="1" fill="#1e1e1e"/><rect x="1908" y="838" width="1" height="1" fill="#1e1e1e"/><rect x="1910" y="838" width="1" height="1" fill="#1e1e1e"/><rect x="1912" y="838" width="1" height="1" fill="#1e1e1e"/><rect x="1914" y="838" width="1" height="1" fill="#1e1e1e"/><rect x="1906" y="840" width="1" height="1" fill="#1e1e1e"/><rect x="1908" y="840" width="1" height="1" fill="#1e1e1e"/><rect x="1910" y="840" width="1" height="1" fill="#1e1e1e"/><rect x="1912" y="840" width="1" height="1" fill="#1e1e1e"/><rect x="1914" y="840" width="1" height="1" fill="#1e1e1e"/></svg>
<div class="a" style="left:1658px;top:843px;width:262px;height:2px;background:#2a2a2a;"></div>
<div class="a" style="left:1658px;top:846px;width:262px;height:17px;background:#353535;"></div>
<div class="a" style="left:1658px;top:846px;width:57px;height:17px;background:#4a4a4a;border-top:1px solid #565656;"></div>
<div class="t" style="left:1665.3px;top:849.96px;font-size:9.5px;color:#e6e6e6;font-weight:bold;transform:scaleX(0.9);transform-origin:0 0;">Aussehen</div>
<svg class="a" style="left:0px;top:0px;" width="1" height="1" viewBox="0 0 1 1"><path d="M1901 852.5h5l-2.5 3z" fill="#c8c8c8"/><path d="M1907 851h8.5M1907 853.25h8.5M1907 855.5h8.5M1907 857.75h8.5" stroke="#d8d8d8" stroke-width="1.1"/></svg>
<div class="a" style="left:1663.5px;top:869px;width:251px;height:130px;background:#4a4a4a;border:1px solid #2e2e2e;"></div>
<div class="a" style="left:1664.5px;top:894.5px;width:249px;height:1px;background:#333;"></div>
<div class="a" style="left:1664.5px;top:919.5px;width:249px;height:1px;background:#333;"></div>
<div class="a" style="left:1664.5px;top:944.5px;width:249px;height:1px;background:#333;"></div>
<div class="a" style="left:1664.5px;top:969.5px;width:249px;height:1px;background:#333;"></div>
<div class="a" style="left:1688px;top:895px;width:1px;height:75px;background:#393939;"></div>
<div class="a" style="left:1666.5px;top:872.5px;width:19px;height:18.5px;background:#fff;border:1px solid #222;"></div>
<div class="a" style="left:1669px;top:875px;width:14px;height:13.5px;background:#e2661f;"></div>
<div class="t" style="left:1711px;top:877.03px;font-size:10px;color:#e6e6e6;font-weight:bold;transform:scaleX(1.03);transform-origin:0 0;">Keine Auswahl</div>
<svg class="a" style="left:0px;top:0px;" width="1" height="1" viewBox="0 0 1 1"><path d="M1670 907c2.3-3.3 7.7-3.3 10 0-2.3 3.3-7.7 3.3-10 0z" fill="none" stroke="#c8c8c8" stroke-width="1.1"/><circle cx="1675" cy="907" r="2" fill="#c8c8c8"/><circle cx="1675.5" cy="906.5" r=".7" fill="#444"/><path d="M1694 903v8l6-4z" fill="#e0e0e0"/></svg>
<svg class="a" style="left:0px;top:0px;" width="1" height="1" viewBox="0 0 1 1"><path d="M1670 932c2.3-3.3 7.7-3.3 10 0-2.3 3.3-7.7 3.3-10 0z" fill="none" stroke="#c8c8c8" stroke-width="1.1"/><circle cx="1675" cy="932" r="2" fill="#c8c8c8"/><circle cx="1675.5" cy="931.5" r=".7" fill="#444"/><path d="M1694 928v8l6-4z" fill="#e0e0e0"/></svg>
<svg class="a" style="left:0px;top:0px;" width="1" height="1" viewBox="0 0 1 1"><path d="M1670 957c2.3-3.3 7.7-3.3 10 0-2.3 3.3-7.7 3.3-10 0z" fill="none" stroke="#5a5a5a" stroke-width="1.1"/><circle cx="1675" cy="957" r="2" fill="#5a5a5a"/></svg>
<div class="t r" style="left:1711px;top:902.03px;font-size:10px;color:#e8913a;transform:scaleX(1.07);transform-origin:0 0;">Kontur:</div>
<div class="a" style="left:1711px;top:913.5px;width:35px;height:1px;border-top:1px dotted #d08a44;"></div>
<div class="t r" style="left:1711px;top:927.03px;font-size:10px;color:#e6e6e6;transform:scaleX(1.0);transform-origin:0 0;">Fläche:</div>
<div class="t r" style="left:1711px;top:952.03px;font-size:10px;color:#e8913a;transform:scaleX(1.03);transform-origin:0 0;">Deckkraft:</div>
<div class="a" style="left:1711px;top:963.5px;width:47px;height:1px;border-top:1px dotted #d08a44;"></div>
<div class="t r" style="left:1788px;top:952.03px;font-size:10px;color:#e6e6e6;transform:scaleX(0.99);transform-origin:0 0;">Standard</div>
<div class="a" style="left:1788.5px;top:898.5px;width:17px;height:17px;background:#fff;border:1px solid #111;box-shadow:0 0 0 1px #ddd;"></div>
<svg class="a" style="left:0px;top:0px;" width="1" height="1" viewBox="0 0 1 1"><path d="M1791 913l12-12" stroke="#d4143a" stroke-width="1.8"/></svg>
<div class="a" style="left:1788.5px;top:923.5px;width:17px;height:17px;background:#fff;border:1px solid #111;box-shadow:0 0 0 1px #ddd;"></div>
<div class="a" style="left:1790.5px;top:925.5px;width:13px;height:13px;background:#e2661f;border:1px solid #111;"></div>
<svg class="a" style="left:0px;top:0px;" width="1" height="1" viewBox="0 0 1 1"><rect x="1670.5" y="1003.5" width="9" height="9" fill="none" stroke="#d4d4d4" stroke-width="1.6"/><rect x="1696.5" y="1003.5" width="9" height="9" fill="none" stroke="#c0c0c0" stroke-width="1.2"/><rect x="1699" y="1006" width="4" height="4" fill="#bbb"/><text x="1720" y="1014" font-family="Liberation Serif" font-style="italic" font-size="14" fill="#c8c8c8">fx</text><path d="M1732 1011h5l-2.5 3z" fill="#c8c8c8"/><circle cx="1833.5" cy="1008.5" r="4.5" fill="none" stroke="#d0d0d0" stroke-width="1.6"/><path d="M1830.3 1005.3l6.4 6.4" stroke="#d0d0d0" stroke-width="1.6"/><path d="M1855 1003h10v11h-10z" fill="#5e5e5e"/><path d="M1855 1009l4 5h-4z" fill="#4a4a4a"/><path d="M1880 1004.5h11" stroke="#646464" stroke-width="1.5"/><path d="M1881 1006h9l-1 8h-7z" fill="none" stroke="#646464" stroke-width="1.2"/></svg>
<div class="a" style="left:1658px;top:1018px;width:262px;height:2px;background:#2a2a2a;"></div>
<div class="a" style="left:1658px;top:1021px;width:262px;height:18px;background:#353535;"></div>
<div class="a" style="left:1658px;top:1021px;width:56px;height:18px;background:#4a4a4a;border-top:1px solid #565656;"></div>
<svg class="a" style="left:0px;top:0px;" width="1" height="1" viewBox="0 0 1 1"><path d="M1663 1028.0l2.75-3.5 2.75 3.5M1663 1029.5l2.75 3.5 2.75-3.5" stroke="#222" stroke-width="2.2" fill="none" opacity=".6"/><path d="M1663 1028.0l2.75-3.5 2.75 3.5M1663 1029.5l2.75 3.5 2.75-3.5" stroke="#d8d8d8" stroke-width="1.2" fill="none"/></svg>
<div class="t" style="left:1671.3px;top:1024.96px;font-size:9.5px;color:#e6e6e6;font-weight:bold;transform:scaleX(0.98);transform-origin:0 0;">Zeichen</div>
<div class="t" style="left:1721px;top:1024.96px;font-size:9.5px;color:#9a9a9a;font-weight:bold;transform:scaleX(0.99);transform-origin:0 0;">Absatz</div>
<div class="a" style="left:1759px;top:1023px;width:1px;height:16px;background:#2a2a2a;"></div>
<div class="t" style="left:1767px;top:1024.96px;font-size:9.5px;color:#9a9a9a;font-weight:bold;transform:scaleX(1.03);transform-origin:0 0;">OpenType</div>
<div class="a" style="left:1822px;top:1023px;width:1px;height:16px;background:#2a2a2a;"></div>
<svg class="a" style="left:0px;top:0px;" width="1" height="1" viewBox="0 0 1 1"><path d="M1901 1027.5h5l-2.5 3z" fill="#c8c8c8"/><path d="M1907 1026h8.5M1907 1028.25h8.5M1907 1030.5h8.5M1907 1032.75h8.5" stroke="#d8d8d8" stroke-width="1.1"/></svg>
<div class="a" style="left:133px;top:751px;width:234px;height:243px;background:rgba(0,0,0,0.25);border-radius:5px 5px 0 0;"></div>
<div class="a" style="left:134px;top:752px;width:232px;height:241px;background:#4a4a4a;border:1px solid #262626;border-radius:4px 4px 0 0;"></div>
<div class="a" style="left:135px;top:753px;width:230px;height:13px;background:#333;border-radius:3px 3px 0 0;"></div>
<svg class="a" style="left:0px;top:0px;" width="1" height="1" viewBox="0 0 1 1"><path d="M341 756.5v7l-3.5-3.5z M345 756.5v7l-3.5-3.5z" fill="#d0d0d0"/><path d="M354 757l5.5 5.5M359.5 757l-5.5 5.5" stroke="#e0e0e0" stroke-width="1.6"/></svg>
<div class="a" style="left:135px;top:766px;width:230px;height:17px;background:#353535;"></div>
<div class="a" style="left:135px;top:766px;width:91px;height:17px;background:#4a4a4a;border-top:1px solid #565656;"></div>
<div class="a" style="left:290.5px;top:767px;width:1px;height:16px;background:#2a2a2a;"></div>
<svg class="a" style="left:0px;top:0px;" width="1" height="1" viewBox="0 0 1 1"><path d="M140 773l2.75-3.5 2.75 3.5M140 774.5l2.75 3.5 2.75-3.5" stroke="#222" stroke-width="2.2" fill="none" opacity=".6"/><path d="M140 773l2.75-3.5 2.75 3.5M140 774.5l2.75 3.5 2.75-3.5" stroke="#d8d8d8" stroke-width="1.2" fill="none"/></svg>
<div class="t" style="left:148.75px;top:770.26px;font-size:9.5px;color:#e6e6e6;font-weight:bold;transform:scaleX(0.96);transform-origin:0 0;">Transformieren</div>
<div class="t" style="left:233px;top:770.26px;font-size:9.5px;color:#9a9a9a;font-weight:bold;transform:scaleX(1.02);transform-origin:0 0;">Ausrichten</div>
<svg class="a" style="left:0px;top:0px;" width="1" height="1" viewBox="0 0 1 1"><path d="M347 772h5l-2.5 3z" fill="#c8c8c8"/><path d="M353 770.5h8M353 773h8M353 775.5h8M353 778h8" stroke="#c8c8c8" stroke-width="1.2"/></svg>
<svg class="a" style="left:0px;top:0px;" width="1" height="1" viewBox="0 0 1 1"><rect x="140.5" y="803.0" width="4.6" height="4.6" fill="#e0e0e0" stroke="#e0e0e0" stroke-width="1"/><rect x="140.5" y="810.3" width="4.6" height="4.6" fill="none" stroke="#e0e0e0" stroke-width="1"/><rect x="140.5" y="817.6" width="4.6" height="4.6" fill="none" stroke="#e0e0e0" stroke-width="1"/><rect x="147.8" y="803.0" width="4.6" height="4.6" fill="none" stroke="#e0e0e0" stroke-width="1"/><rect x="147.8" y="810.3" width="4.6" height="4.6" fill="none" stroke="#e0e0e0" stroke-width="1"/><rect x="147.8" y="817.6" width="4.6" height="4.6" fill="none" stroke="#e0e0e0" stroke-width="1"/><rect x="155.1" y="803.0" width="4.6" height="4.6" fill="none" stroke="#e0e0e0" stroke-width="1"/><rect x="155.1" y="810.3" width="4.6" height="4.6" fill="none" stroke="#e0e0e0" stroke-width="1"/><rect x="155.1" y="817.6" width="4.6" height="4.6" fill="none" stroke="#e0e0e0" stroke-width="1"/><path d="M145.1 805.3h2.7M152.4 805.3h2.7M145.1 812.6h2.7M152.4 812.6h2.7M145.1 819.9h2.7M152.4 819.9h2.7M142.8 807.6v2.7M142.8 814.9v2.7M150.1 807.6v2.7M150.1 814.9v2.7M157.4 807.6v2.7M157.4 814.9v2.7" stroke="#e0e0e0"/></svg>
<div class="t r" style="left:173px;top:795.03px;font-size:10px;color:#7e7e7e;transform:scaleX(1.0);transform-origin:0 0;">x:</div>
<div class="t r" style="left:173px;top:821.03px;font-size:10px;color:#7e7e7e;transform:scaleX(1.0);transform-origin:0 0;">y:</div>
<div class="t r" style="left:251.5px;top:795.03px;font-size:10px;color:#7e7e7e;transform:scaleX(1.0);transform-origin:0 0;">B:</div>
<div class="t r" style="left:251.5px;top:821.03px;font-size:10px;color:#7e7e7e;transform:scaleX(1.0);transform-origin:0 0;">H:</div>
<div class="a" style="left:187.5px;top:790.5px;width:56px;height:18px;background:#6c6c6c;border:1px solid #333;"></div>
<div class="t" style="left:191.0px;top:795.24px;font-size:10px;color:#2a2a2a;transform:scaleX(0.98);transform-origin:0 0;">0 mm</div>
<div class="a" style="left:266px;top:790.5px;width:57px;height:18px;background:#6c6c6c;border:1px solid #333;"></div>
<div class="t" style="left:269.5px;top:795.24px;font-size:10px;color:#2a2a2a;transform:scaleX(0.98);transform-origin:0 0;">0 mm</div>
<div class="a" style="left:187.5px;top:816.5px;width:56px;height:18px;background:#6c6c6c;border:1px solid #333;"></div>
<div class="t" style="left:191.0px;top:821.24px;font-size:10px;color:#2a2a2a;transform:scaleX(0.98);transform-origin:0 0;">0 mm</div>
<div class="a" style="left:266px;top:816.5px;width:57px;height:18px;background:#6c6c6c;border:1px solid #333;"></div>
<div class="t" style="left:269.5px;top:821.24px;font-size:10px;color:#2a2a2a;transform:scaleX(0.98);transform-origin:0 0;">0 mm</div>
<div class="a" style="left:328px;top:800px;width:24px;height:24px;background:#363636;border:1px solid #2e2e2e;"></div>
<svg class="a" style="left:0px;top:0px;" width="1" height="1" viewBox="0 0 1 1"><rect x="337" y="805.5" width="5" height="6.5" rx="2.5" fill="none" stroke="#e0e0e0" stroke-width="1.5"/><rect x="337" y="811" width="5" height="6.5" rx="2.5" fill="none" stroke="#e0e0e0" stroke-width="1.5"/></svg>
<div class="a" style="left:187.5px;top:842.5px;width:54px;height:18px;background:#6c6c6c;border:1px solid #333;"></div>
<div class="a" style="left:226.5px;top:843px;width:1px;height:17px;background:#3e3e3e;"></div>
<div class="t" style="left:190.5px;top:847.03px;font-size:10px;color:#2a2a2a;transform:scaleX(1.0);transform-origin:0 0;">0°</div>
<svg class="a" style="left:0px;top:0px;" width="1" height="1" viewBox="0 0 1 1"><path d="M231.5 849.5h7l-3.5 4z" fill="#8a8a8a"/></svg>
<div class="a" style="left:268.5px;top:842.5px;width:54px;height:18px;background:#6c6c6c;border:1px solid #333;"></div>
<div class="a" style="left:307.5px;top:843px;width:1px;height:17px;background:#3e3e3e;"></div>
<div class="t" style="left:271.5px;top:847.03px;font-size:10px;color:#2a2a2a;transform:scaleX(1.0);transform-origin:0 0;">0°</div>
<svg class="a" style="left:0px;top:0px;" width="1" height="1" viewBox="0 0 1 1"><path d="M312.5 849.5h7l-3.5 4z" fill="#8a8a8a"/></svg>
<svg class="a" style="left:0px;top:0px;" width="1" height="1" viewBox="0 0 1 1"><path d="M169 855h12l-6-6.5z" fill="none" stroke="#6e6e6e"/><path d="M249 855l5-7h7l-5 7z" fill="none" stroke="#6e6e6e"/><path d="M182 849v1M182 853v1M263 849v1M263 853v1" stroke="#6e6e6e" stroke-width="1.3"/></svg>
<div class="a" style="left:135px;top:867px;width:230px;height:2px;background:#2a2a2a;"></div>
<div class="a" style="left:135px;top:869px;width:230px;height:18px;background:#353535;"></div>
<div class="a" style="left:135px;top:869px;width:64px;height:18px;background:#4a4a4a;border-top:1px solid #565656;"></div>
<div class="t" style="left:142.5px;top:873.46px;font-size:9.5px;color:#e6e6e6;font-weight:bold;transform:scaleX(1.03);transform-origin:0 0;">Pathfinder</div>
<svg class="a" style="left:0px;top:0px;" width="1" height="1" viewBox="0 0 1 1"><path d="M347 875h5l-2.5 3z" fill="#c8c8c8"/><path d="M353 873.5h8M353 876h8M353 878.5h8M353 881h8" stroke="#c8c8c8" stroke-width="1.2"/></svg>
<div class="t r" style="left:140px;top:895.03px;font-size:10px;color:#e2e2e2;transform:scaleX(0.97);transform-origin:0 0;">Formmodi:</div>
<div class="t r" style="left:140px;top:945.03px;font-size:10px;color:#e2e2e2;transform:scaleX(1.01);transform-origin:0 0;">Pathfinder:</div>
<svg class="a" style="left:0px;top:0px;" width="1" height="1" viewBox="0 0 1 1"><rect x="146" y="918" width="9" height="8.5" fill="#a8a8a8" stroke="#cfcfcf"/><rect x="150" y="922" width="9" height="8.5" fill="#a8a8a8" stroke="#cfcfcf"/><rect x="178" y="918" width="9" height="8.5" fill="#a8a8a8" stroke="#cfcfcf"/><rect x="182" y="922" width="9" height="8.5" fill="none" stroke="#777"/><rect x="210.5" y="918" width="9" height="8.5" fill="none" stroke="#cfcfcf"/><rect x="214.5" y="922" width="9" height="8.5" fill="none" stroke="#cfcfcf"/><rect x="214.5" y="922" width="5" height="4.5" fill="#999"/><rect x="243" y="918" width="9" height="8.5" fill="#999" stroke="#cfcfcf"/><rect x="247" y="922" width="9" height="8.5" fill="#999" stroke="#cfcfcf"/><rect x="247" y="922" width="5" height="4.5" fill="#4a4a4a"/></svg>
<div class="a" style="left:271.5px;top:915.5px;width:87px;height:18px;background:#505050;border:1px solid #3a3a3a;"></div>
<div class="t r" style="left:288px;top:920.03px;font-size:10px;color:#787878;transform:scaleX(0.98);transform-origin:0 0;">Umwandeln</div>
<svg class="a" style="left:0px;top:0px;" width="1" height="1" viewBox="0 0 1 1"><path d="M149.5 975v-7.5h7.5v3.5M149.5 975h3.5" stroke="#d4d4d4" fill="none" stroke-width="1.2"/><rect x="153" y="971.5" width="5.5" height="5.5" fill="#8a8a8a" stroke="#d4d4d4" stroke-width="1.1"/><path d="M158.5 975h4v7h-7.5v-5" stroke="#d4d4d4" fill="none" stroke-width="1.2"/><path d="M186 967.5h6v4h-2v3h-4z" fill="#d4d4d4"/><path d="M193.5 967.5h-1v5h-2.5v3h2.5v-1h1z" fill="#bdbdbd"/><path d="M194 971.5h6v11h-10v-5h4z" fill="#c8c8c8"/><rect x="223" y="967.5" width="9.5" height="9" fill="#d8d8d8"/><path d="M233 972.5h4.5v10h-10v-5h5.5z" fill="#bdbdbd"/><rect x="260" y="968" width="10" height="9" fill="#555"/><rect x="264" y="971" width="6" height="6" fill="#d0d0d0"/><path d="M270.5 971.5h3.5v10h-10v-4h6.5z" fill="#6e6e6e"/><path d="M298.5 975v-7h7.5v3" stroke="#d4d4d4" fill="none" stroke-width="1.2"/><rect x="302.5" y="971.5" width="4.5" height="4.5" fill="none" stroke="#d4d4d4" stroke-width="1.1"/><path d="M307 974.5h4.5v7.5h-7.5v-5" stroke="#d4d4d4" fill="none" stroke-width="1.2"/><path d="M298.5 975h3.5" stroke="#d4d4d4" stroke-width="1.2"/><path d="M336.5 976v-8.5h8.5v3.5" stroke="#2a2a2a" fill="none" stroke-width="1.2"/><path d="M345.5 971.5h4v10h-9.5v-4.5h5.5z" fill="#b8b8b8" stroke="#d0d0d0" stroke-width=".8"/></svg>
</body></html>
